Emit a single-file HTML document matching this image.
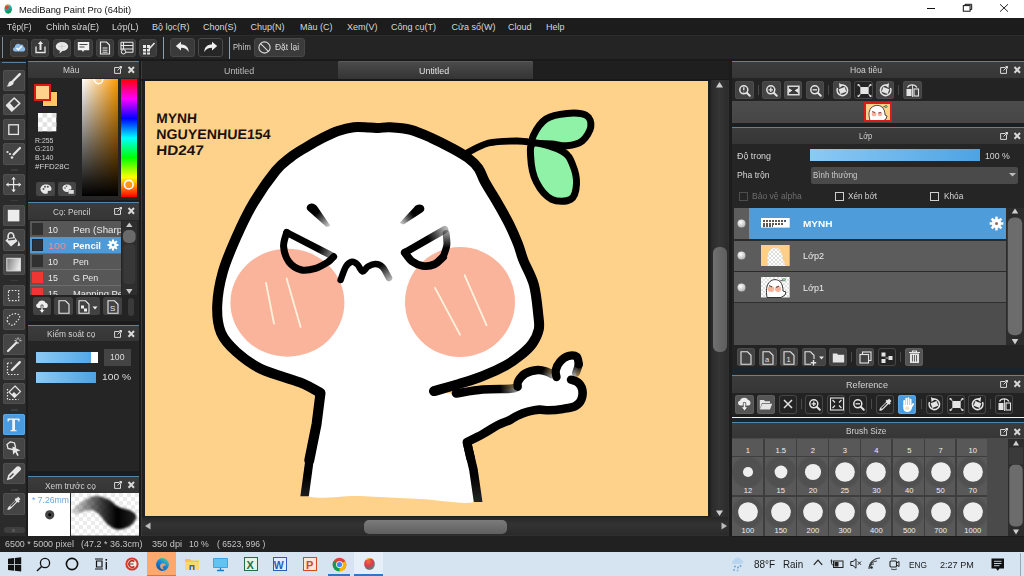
<!DOCTYPE html>
<html><head><meta charset="utf-8">
<style>
*{margin:0;padding:0;box-sizing:border-box}
html,body{width:1024px;height:576px;overflow:hidden;background:#1e1e1e;font-family:"Liberation Sans",sans-serif}
.a{position:absolute}
.t{position:absolute;white-space:nowrap;line-height:1}
svg{position:absolute;overflow:visible}
</style></head><body>
<div class="a" style="left:0px;top:0px;width:1024px;height:18px;background:#fff;"></div>
<div class="a" style="left:0px;top:18px;width:1024px;height:17px;background:#1c1c1c;"></div>
<div class="a" style="left:0px;top:35px;width:1024px;height:26px;background:#242424;"></div>
<div class="a" style="left:0px;top:61px;width:1024px;height:476px;background:#1e1e1e;"></div>
<div class="a" style="left:0px;top:537px;width:1024px;height:14px;background:#202020;"></div>
<div class="a" style="left:0px;top:551px;width:1024px;height:25px;background:#d9e6f2;"></div>
<svg style="left:3.5px;top:3.5px" width="9" height="10" viewBox="0 0 9 10"><defs><linearGradient id="tg" x1="0" y1="0" x2="0.3" y2="1"><stop offset="0" stop-color="#3ad0b0"/><stop offset="0.6" stop-color="#18a8a0"/><stop offset="1" stop-color="#0c9040"/></linearGradient></defs><ellipse cx="4.2" cy="5.1" rx="3.8" ry="4.6" fill="url(#tg)"/><circle cx="2.9" cy="3.2" r="2" fill="#e5402e"/><path d="M1.5 1.8 C2.5 0.5 4.5 0.6 5 1.6" stroke="#f4a83a" stroke-width="1" fill="none"/></svg>
<div class="t" style="left:19.00px;top:4.96px;font-size:9.5px;color:#111;transform:scaleX(0.9822) ;transform-origin:0 8.04px;">MediBang Paint Pro (64bit)</div>
<div class="t" style="left:7.00px;top:22.78px;font-size:9px;color:#d8d8d8;transform:scaleX(0.9074) ;transform-origin:0 7.62px;">Tệp(F)</div>
<div class="t" style="left:45.80px;top:22.78px;font-size:9px;color:#d8d8d8;transform:scaleX(0.9901) ;transform-origin:0 7.62px;">Chỉnh sửa(E)</div>
<div class="t" style="left:112.40px;top:22.78px;font-size:9px;color:#d8d8d8;transform:scaleX(0.9812) ;transform-origin:0 7.62px;">Lớp(L)</div>
<div class="t" style="left:152.00px;top:22.78px;font-size:9px;color:#d8d8d8;">Bộ lọc(R)</div>
<div class="t" style="left:203.00px;top:22.78px;font-size:9px;color:#d8d8d8;">Chọn(S)</div>
<div class="t" style="left:250.60px;top:22.78px;font-size:9px;color:#d8d8d8;">Chụp(N)</div>
<div class="t" style="left:300.00px;top:22.78px;font-size:9px;color:#d8d8d8;">Màu (C)</div>
<div class="t" style="left:347.00px;top:22.78px;font-size:9px;color:#d8d8d8;">Xem(V)</div>
<div class="t" style="left:391.00px;top:22.78px;font-size:9px;color:#d8d8d8;">Công cụ(T)</div>
<div class="t" style="left:451.50px;top:22.78px;font-size:9px;color:#d8d8d8;">Cửa sổ(W)</div>
<div class="t" style="left:508.00px;top:22.78px;font-size:9px;color:#d8d8d8;">Cloud</div>
<div class="t" style="left:546.00px;top:22.78px;font-size:9px;color:#d8d8d8;">Help</div>
<div class="a" style="left:0px;top:35px;width:1024px;height:1px;background:#2c2c2c;"></div>
<div class="a" style="left:2px;top:37px;width:1px;height:21px;background:#7a8a96;"></div>
<div class="a" style="left:9.8px;top:38.5px;width:18.2px;height:18px;background:#3a3a3a;border:1px solid #454545;border-radius:3px"></div>
<div class="a" style="left:31.3px;top:38.5px;width:18.2px;height:18px;background:#3a3a3a;border:1px solid #454545;border-radius:3px"></div>
<div class="a" style="left:53px;top:38.5px;width:18.2px;height:18px;background:#3a3a3a;border:1px solid #454545;border-radius:3px"></div>
<div class="a" style="left:74.4px;top:38.5px;width:18.2px;height:18px;background:#3a3a3a;border:1px solid #454545;border-radius:3px"></div>
<div class="a" style="left:96px;top:38.5px;width:18.2px;height:18px;background:#3a3a3a;border:1px solid #454545;border-radius:3px"></div>
<div class="a" style="left:117.7px;top:38.5px;width:18.2px;height:18px;background:#3a3a3a;border:1px solid #454545;border-radius:3px"></div>
<div class="a" style="left:139.2px;top:38.5px;width:18.2px;height:18px;background:#3a3a3a;border:1px solid #454545;border-radius:3px"></div>
<svg style="left:12px;top:41px" width="14" height="12" viewBox="0 0 14 12"><path d="M3 10.5 C0.5 10.5 0.3 6.5 2.8 6.3 C2.8 3 6.5 1.5 8.3 3.8 C9.8 2.8 12 4 11.6 6 C13.8 6.3 13.8 10.5 11.3 10.5Z" fill="#8dbbe8"/><path d="M4.5 7 L6.3 8.8 L9.8 5.2" stroke="#fff" stroke-width="1.4" fill="none"/></svg>
<svg style="left:34px;top:40px" width="13" height="14" viewBox="0 0 13 14"><path d="M2 6.5 V12.5 H11 V6.5" stroke="#e8e8e8" stroke-width="1.3" fill="none"/><path d="M6.5 1 L3.8 4 H5.5 V10 H7.5 V4 H9.2Z" fill="#e8e8e8"/></svg>
<svg style="left:55px;top:41px" width="14" height="13" viewBox="0 0 14 13"><ellipse cx="7" cy="5.5" rx="6.2" ry="4.6" fill="#e8e8e8"/><path d="M5 9.5 L4.5 12.5 L8 9.6Z" fill="#e8e8e8"/><path d="M3.5 5.5 H10.5 M7 2.5 V8.5" stroke="#bbb" stroke-width="0.5"/></svg>
<svg style="left:77px;top:41px" width="13" height="13" viewBox="0 0 13 13"><path d="M0.8 1 H12.2 V9.3 H7.2 L6 11 L4.8 9.3 H0.8Z" fill="#f0f0f0"/><path d="M2.5 3.5 H10.5 M2.5 6 H7.5" stroke="#444" stroke-width="1.1"/></svg>
<svg style="left:99px;top:40.5px" width="12" height="14" viewBox="0 0 12 14"><path d="M1.5 1 H7.5 L10.5 4 V13 H1.5Z" stroke="#e8e8e8" stroke-width="1.2" fill="none"/><path d="M3.5 7 H8.5 M3.5 9.2 H8.5 M3.5 11.2 H8.5" stroke="#e8e8e8" stroke-width="1"/></svg>
<svg style="left:120px;top:40.5px" width="14" height="14" viewBox="0 0 14 14"><path d="M1 1.2 H13 M1 1.2 V9 M3.5 1.2 V13 M1 4.5 H13 M1 8 H13 M5.5 11.3 H13 M13 1.2 V11.3" stroke="#e8e8e8" stroke-width="1.1" fill="none"/><circle cx="3.5" cy="10.8" r="2.2" stroke="#e8e8e8" stroke-width="1" fill="#3a3a3a"/></svg>
<svg style="left:142px;top:40.5px" width="14" height="14" viewBox="0 0 14 14"><path d="M1 4 H4 V7 H1Z M5 4 H8 V7 H5Z M1 8 H4 V10.5 H1Z M5 8 H8 V10.5 H5Z M1 11.5 H4 V13.5 H1Z M5 11.5 H8 V13.5 H5Z" fill="#e8e8e8"/><path d="M7 8 L12.5 2" stroke="#e8e8e8" stroke-width="1.6"/></svg>
<div class="a" style="left:162.7px;top:36.5px;width:1px;height:22px;background:#8aa0b0;"></div>
<div class="a" style="left:170.2px;top:38px;width:24.6px;height:18.5px;background:#3a3a3a;border:1px solid #474747;border-radius:3px"></div>
<div class="a" style="left:198.4px;top:38px;width:24.3px;height:18.5px;background:#262626;border:1px solid #4a4a4a;border-radius:3px"></div>
<svg style="left:175px;top:41px" width="15" height="12" viewBox="0 0 15 12"><path d="M0.8 5 L6 0.8 V3.4 C10.5 3.4 13.8 6 13.6 11 C12 8 9.5 6.8 6 6.8 V9.4Z" fill="#efefef"/></svg>
<svg style="left:203px;top:41px" width="15" height="12" viewBox="0 0 15 12"><path d="M14.2 5 L9 0.8 V3.4 C4.5 3.4 1.2 6 1.4 11 C3 8 5.5 6.8 9 6.8 V9.4Z" fill="#efefef"/></svg>
<div class="a" style="left:229px;top:36.5px;width:1px;height:22px;background:#8aa0b0;"></div>
<div class="t" style="left:233.20px;top:43.38px;font-size:9px;color:#cfcfcf;transform:scaleX(0.8476) ;transform-origin:0 7.62px;">Phím</div>
<div class="a" style="left:253.7px;top:38px;width:51.3px;height:18.5px;background:#3b3b3b;border:1px solid #484848;border-radius:3px"></div>
<svg style="left:257.5px;top:41px" width="13" height="13" viewBox="0 0 13 13"><circle cx="6.5" cy="6.5" r="5.6" stroke="#dcdcdc" stroke-width="1.1" fill="none"/><path d="M2.6 2.6 L10.4 10.4" stroke="#dcdcdc" stroke-width="1.1"/></svg>
<div class="t" style="left:274.50px;top:43.38px;font-size:9px;color:#d8d8d8;transform:scaleX(0.9412) ;transform-origin:0 7.62px;">Đặt lại</div>
<div class="a" style="left:0px;top:58.5px;width:1024px;height:2.5px;background:#1a1a1a;"></div>
<div class="a" style="left:926.7px;top:7.9px;width:8.5px;height:1px;background:#111;"></div>
<svg style="left:962px;top:3px" width="12" height="10" viewBox="0 0 12 10"><rect x="1.3" y="2.6" width="6.8" height="5.6" stroke="#111" stroke-width="1" fill="#fff"/><path d="M3 2.6 V1.3 H9.7 V6.5 H8.1" stroke="#111" stroke-width="1" fill="none"/></svg>
<svg style="left:999px;top:3px" width="11" height="10" viewBox="0 0 11 10"><path d="M1 1.2 L9 8.7 M9 1.2 L1 8.7" stroke="#111" stroke-width="0.9"/></svg>
<div class="a" style="left:0px;top:61px;width:26px;height:476px;background:#2b2b2b;"></div>
<div class="a" style="left:26px;top:61px;width:2px;height:476px;background:#1c1c1c;"></div>
<div class="a" style="left:2px;top:62px;width:24px;height:1px;background:#5d7f98;"></div>
<div class="a" style="left:10.5px;top:169.3px;width:7px;height:1.5px;background:#3c3c3c;"></div>
<div class="a" style="left:10.5px;top:199.8px;width:7px;height:1.5px;background:#3c3c3c;"></div>
<div class="a" style="left:10.5px;top:279.5px;width:7px;height:1.5px;background:#3c3c3c;"></div>
<div class="a" style="left:10.5px;top:409.1px;width:7px;height:1.5px;background:#3c3c3c;"></div>
<div class="a" style="left:10.5px;top:489.2px;width:7px;height:1.5px;background:#3c3c3c;"></div>
<div class="a" style="left:3.4px;top:69.6px;width:21.3px;height:21.3px;background:#454545;border-radius:2.5px;box-shadow:inset 0 0 0 1px #505050"></div>
<svg style="left:3.4px;top:69.6px" width="21.3" height="21.3" viewBox="0 0 21.3 21.3"><path d="M16.8 4.2 L9.5 11.5" stroke="#e6e6e6" stroke-width="2.4" stroke-linecap="round"/><path d="M9.8 11.2 C7 10.3 5 12.6 5.3 14.6 L3.6 16.3 C6.6 16.8 9.9 15.4 10.8 13Z" fill="#e6e6e6"/></svg>
<div class="a" style="left:3.4px;top:94.2px;width:21.3px;height:21.3px;background:#454545;border-radius:2.5px;box-shadow:inset 0 0 0 1px #505050"></div>
<svg style="left:3.4px;top:94.2px" width="21.3" height="21.3" viewBox="0 0 21.3 21.3"><path d="M11.2 4 L16.8 9.4 L8.75 17 L3.6 11.4Z" stroke="#e6e6e6" stroke-width="1.5" fill="none" stroke-linejoin="round"/><path d="M3.4 11.4 L6.4 8.6 L11.7 14.4 L8.75 17.2Z" fill="#e6e6e6"/></svg>
<div class="a" style="left:3.4px;top:118.8px;width:21.3px;height:21.3px;background:#454545;border-radius:2.5px;box-shadow:inset 0 0 0 1px #505050"></div>
<svg style="left:3.4px;top:118.8px" width="21.3" height="21.3" viewBox="0 0 21.3 21.3"><rect x="5.8" y="5.8" width="9.6" height="9.6" stroke="#e6e6e6" stroke-width="1.3" fill="none"/></svg>
<div class="a" style="left:3.4px;top:143.4px;width:21.3px;height:21.3px;background:#454545;border-radius:2.5px;box-shadow:inset 0 0 0 1px #505050"></div>
<svg style="left:3.4px;top:143.4px" width="21.3" height="21.3" viewBox="0 0 21.3 21.3"><path d="M17 5 L10.5 11.5" stroke="#e6e6e6" stroke-width="2.2" stroke-linecap="round"/><circle cx="4.5" cy="9" r="1.1" fill="#e6e6e6"/><circle cx="7" cy="11" r="1.1" fill="#e6e6e6"/><circle cx="9" cy="14.5" r="1.3" fill="#e6e6e6"/></svg>
<div class="a" style="left:3.4px;top:174.2px;width:21.3px;height:21.3px;background:#454545;border-radius:2.5px;box-shadow:inset 0 0 0 1px #505050"></div>
<svg style="left:3.4px;top:174.2px" width="21.3" height="21.3" viewBox="0 0 21.3 21.3"><path d="M10.6 3.5 V17.7 M3.5 10.6 H17.7" stroke="#e6e6e6" stroke-width="1.2"/><path d="M10.6 3 L8.4 5.6 H12.8Z M10.6 18.2 L8.4 15.6 H12.8Z M3 10.6 L5.6 8.4 V12.8Z M18.2 10.6 L15.6 8.4 V12.8Z" fill="#e6e6e6"/></svg>
<div class="a" style="left:3.4px;top:204.8px;width:21.3px;height:21.3px;background:#454545;border-radius:2.5px;box-shadow:inset 0 0 0 1px #505050"></div>
<svg style="left:3.4px;top:204.8px" width="21.3" height="21.3" viewBox="0 0 21.3 21.3"><rect x="4.8" y="4.8" width="11.6" height="11.6" fill="#ececec"/></svg>
<div class="a" style="left:3.4px;top:229.4px;width:21.3px;height:21.3px;background:#454545;border-radius:2.5px;box-shadow:inset 0 0 0 1px #505050"></div>
<svg style="left:3.4px;top:229.4px" width="21.3" height="21.3" viewBox="0 0 21.3 21.3"><path d="M5.2 9.3 C4.6 5.5 6 3.6 8 3.8 C10 4 11.2 6.3 10.8 8.6" stroke="#e6e6e6" stroke-width="1.6" fill="none"/><path d="M2.4 11.6 L4.8 9.2 L11.6 8.1 L14.5 11.9 L8 17.6Z" fill="#e6e6e6"/><path d="M5.2 10.8 L12 10" stroke="#454545" stroke-width="1.5"/><path d="M15.6 11.6 L17.4 16.6 L14.6 17.2Z" fill="#e6e6e6"/></svg>
<div class="a" style="left:3.4px;top:254px;width:21.3px;height:21.3px;background:#454545;border-radius:2.5px;box-shadow:inset 0 0 0 1px #505050"></div>
<svg style="left:3.4px;top:254px" width="21.3" height="21.3" viewBox="0 0 21.3 21.3"><defs><linearGradient id="gg" x1="0" y1="0" x2="1" y2="0.3"><stop offset="0" stop-color="#7a7a7a"/><stop offset="1" stop-color="#e8e8e8"/></linearGradient></defs><rect x="3.8" y="4.3" width="13.6" height="12.6" fill="url(#gg)" stroke="#dcdcdc" stroke-width="1"/></svg>
<div class="a" style="left:3.4px;top:284.6px;width:21.3px;height:21.3px;background:#454545;border-radius:2.5px;box-shadow:inset 0 0 0 1px #505050"></div>
<svg style="left:3.4px;top:284.6px" width="21.3" height="21.3" viewBox="0 0 21.3 21.3"><rect x="5.5" y="5.5" width="10.2" height="10.2" stroke="#e6e6e6" stroke-width="1.2" stroke-dasharray="1.6 1.6" fill="none"/></svg>
<div class="a" style="left:3.4px;top:309.2px;width:21.3px;height:21.3px;background:#454545;border-radius:2.5px;box-shadow:inset 0 0 0 1px #505050"></div>
<svg style="left:3.4px;top:309.2px" width="21.3" height="21.3" viewBox="0 0 21.3 21.3"><path d="M4.5 12.5 C3 9 6.5 6 10 5 C14 3.8 17.5 5.5 16.5 9 C15.8 11.5 13 12 12 14.5 C11 17 6.5 17 4.5 12.5Z" stroke="#e6e6e6" stroke-width="1.2" stroke-dasharray="1.5 1.5" fill="none"/></svg>
<div class="a" style="left:3.4px;top:333.8px;width:21.3px;height:21.3px;background:#454545;border-radius:2.5px;box-shadow:inset 0 0 0 1px #505050"></div>
<svg style="left:3.4px;top:333.8px" width="21.3" height="21.3" viewBox="0 0 21.3 21.3"><path d="M5 17 L13.5 8.5" stroke="#e6e6e6" stroke-width="2.2" stroke-linecap="round"/><path d="M15 3.5 V5.5 M15 8 V10 M11.5 6.7 H13.5 M16.5 6.7 H18.5 M12.8 4.5 L13.8 5.5 M17.3 4.5 L16.3 5.5" stroke="#e6e6e6" stroke-width="1"/></svg>
<div class="a" style="left:3.4px;top:358.4px;width:21.3px;height:21.3px;background:#454545;border-radius:2.5px;box-shadow:inset 0 0 0 1px #505050"></div>
<svg style="left:3.4px;top:358.4px" width="21.3" height="21.3" viewBox="0 0 21.3 21.3"><path d="M4.5 5 V16.5 H15.5" stroke="#e6e6e6" stroke-width="1.2" stroke-dasharray="1.5 1.5" fill="none"/><path d="M4.5 5 H9" stroke="#e6e6e6" stroke-width="1.2" stroke-dasharray="1.5 1.5"/><path d="M16.8 4.2 L9 12" stroke="#e6e6e6" stroke-width="2.4" stroke-linecap="round"/></svg>
<div class="a" style="left:3.4px;top:383px;width:21.3px;height:21.3px;background:#454545;border-radius:2.5px;box-shadow:inset 0 0 0 1px #505050"></div>
<svg style="left:3.4px;top:383px" width="21.3" height="21.3" viewBox="0 0 21.3 21.3"><path d="M4.5 6 V16.5 H15.5" stroke="#e6e6e6" stroke-width="1.2" stroke-dasharray="1.5 1.5" fill="none"/><path d="M12 3 L17.5 8.5 L11.5 14.5 L6 9Z" stroke="#e6e6e6" stroke-width="1.2" fill="#444"/><path d="M8.5 11.5 L11.5 14.5 L14 12 L11 9Z" fill="#e6e6e6"/></svg>
<div class="a" style="left:3.4px;top:413.6px;width:21.3px;height:21.3px;background:#4a9be0;border-radius:2.5px;box-shadow:inset 0 0 0 1px #5aa8e8"></div>
<svg style="left:3.4px;top:413.6px" width="21.3" height="21.3" viewBox="0 0 21.3 21.3"><path d="M4.5 4.5 H16.5 V7.5 H15.5 C15.3 6 14.8 5.8 12 5.8 V15.6 C12 16.3 12.5 16.4 13.8 16.5 V17.2 H7.4 V16.5 C8.7 16.4 9.2 16.3 9.2 15.6 V5.8 C6.4 5.8 5.9 6 5.7 7.5 H4.5Z" fill="#f0f6fc"/></svg>
<div class="a" style="left:3.4px;top:438.2px;width:21.3px;height:21.3px;background:#454545;border-radius:2.5px;box-shadow:inset 0 0 0 1px #505050"></div>
<svg style="left:3.4px;top:438.2px" width="21.3" height="21.3" viewBox="0 0 21.3 21.3"><path d="M7.5 3.8 L11.5 5 L12.5 9 L9.5 11.5 L5 10.5 L4 6.5Z" stroke="#e6e6e6" stroke-width="1.3" fill="none"/><path d="M9.5 8.5 L17.5 12.5 L13.8 13.5 L15.8 17.3 L14.3 18 L12.3 14.3 L10 16.8Z" fill="#e6e6e6"/></svg>
<div class="a" style="left:3.4px;top:462.8px;width:21.3px;height:21.3px;background:#454545;border-radius:2.5px;box-shadow:inset 0 0 0 1px #505050"></div>
<svg style="left:3.4px;top:462.8px" width="21.3" height="21.3" viewBox="0 0 21.3 21.3"><path d="M17.5 4.5 C18.5 5.5 18 6.8 17 7.8 L9 15.8 L3.8 17.2 L5.2 12 L13.5 3.8 C14.8 2.8 16.3 3.3 17.5 4.5Z" fill="#e6e6e6"/><path d="M6.5 14.5 L10.5 10.5" stroke="#454545" stroke-width="1.4"/></svg>
<div class="a" style="left:3.4px;top:493.4px;width:21.3px;height:21.3px;background:#454545;border-radius:2.5px;box-shadow:inset 0 0 0 1px #505050"></div>
<svg style="left:3.4px;top:493.4px" width="21.3" height="21.3" viewBox="0 0 21.3 21.3"><path d="M15 3.5 L17.5 6 L16 7.5 L16.8 8.3 L15.3 9.8 L14.5 9 L8.5 15 C7.5 16.2 6 17.2 4.5 17 C4.3 15.5 5.3 14 6.5 13 L12.5 7 L11.7 6.2 L13.2 4.7 L14 5.5Z" fill="#e6e6e6"/><path d="M7.5 13.5 L12.8 8.3" stroke="#454545" stroke-width="1.3"/></svg>
<div class="a" style="left:3.5px;top:527.3px;width:21px;height:6px;background:#3f3f3f;border-radius:3px"></div>
<div class="a" style="left:12px;top:528.5px;width:3px;height:3.5px;background:#555;"></div>
<div class="a" style="left:28px;top:61px;width:111px;height:476px;background:#252525;"></div>
<div class="a" style="left:139px;top:61px;width:1.5px;height:476px;background:#1a1a1a;"></div>
<div class="a" style="left:28px;top:61px;width:111px;height:1px;background:#4f87ad;"></div>
<div class="a" style="left:28px;top:62px;width:111px;height:16px;background:linear-gradient(#3c3c3c,#353535)"></div>
<div class="t" style="left:62.50px;top:66.20px;font-size:8.5px;color:#d2d2d2;transform:scaleX(0.9911) ;transform-origin:0 7.20px;">Màu</div>
<svg style="left:114px;top:65.5px" width="22" height="8" viewBox="0 0 22 8"><path d="M5.5 1.5 H0.6 V7.4 H6.5 V2.5" stroke="#d8d8d8" stroke-width="1" fill="none"/><path d="M3.5 4.5 L7.5 0.5 M5.5 0.5 H7.5 V2.5" stroke="#d8d8d8" stroke-width="1" fill="none"/><path d="M14.5 1 L20 6.8 M20 1 L14.5 6.8" stroke="#d8d8d8" stroke-width="2"/></svg>
<div class="a" style="left:41.8px;top:91px;width:16.4px;height:16.4px;background:#ffc864;border:1px solid #1a1a1a"></div>
<div class="a" style="left:33.9px;top:83.7px;width:17.6px;height:17px;background:#ffd28c;border:2px solid #e01818"></div>
<svg style="left:37.5px;top:112.9px" width="18.3" height="18.3"><rect width="18.3" height="18.3" fill="#fff"/><rect x="4.6" y="0" width="4.6" height="4.6" fill="#e2e2e2"/><rect x="13.7" y="0" width="4.6" height="4.6" fill="#e2e2e2"/><rect x="0" y="4.6" width="4.6" height="4.6" fill="#e2e2e2"/><rect x="9.2" y="4.6" width="4.6" height="4.6" fill="#e2e2e2"/><rect x="4.6" y="9.2" width="4.6" height="4.6" fill="#e2e2e2"/><rect x="13.7" y="9.2" width="4.6" height="4.6" fill="#e2e2e2"/><rect x="0" y="13.7" width="4.6" height="4.6" fill="#e2e2e2"/><rect x="9.2" y="13.7" width="4.6" height="4.6" fill="#e2e2e2"/></svg>
<div class="t" style="left:34.60px;top:136.71px;font-size:7.2px;color:#d4d4d4;transform:scaleX(0.9590) ;transform-origin:0 6.09px;">R:255</div>
<div class="t" style="left:34.60px;top:145.46px;font-size:7.2px;color:#d4d4d4;transform:scaleX(0.9391) ;transform-origin:0 6.09px;">G:210</div>
<div class="t" style="left:34.60px;top:154.21px;font-size:7.2px;color:#d4d4d4;transform:scaleX(0.9789) ;transform-origin:0 6.09px;">B:140</div>
<div class="t" style="left:34.60px;top:162.66px;font-size:7.2px;color:#d4d4d4;transform:scaleX(1.1041) ;transform-origin:0 6.09px;">#FFD28C</div>
<div class="a" style="left:36px;top:182.2px;width:18.5px;height:13.6px;background:#464646;border-radius:2px"></div>
<div class="a" style="left:57.7px;top:182.2px;width:18.5px;height:13.6px;background:#464646;border-radius:2px"></div>
<svg style="left:40px;top:184px" width="12" height="10" viewBox="0 0 12 10"><path d="M6 0.5 C9.5 0.5 11.5 2.5 11.5 5 C11.5 7 10 7 9 6.8 C8 6.6 7.5 7.5 7.8 8.5 C8 9.5 7 9.8 6 9.8 C2.8 9.8 0.5 7.5 0.5 5 C0.5 2.5 2.8 0.5 6 0.5Z" fill="#e8e8e8"/><circle cx="3.5" cy="5" r="1" fill="#555"/><circle cx="5" cy="2.8" r="1" fill="#555"/><circle cx="7.8" cy="2.8" r="1" fill="#555"/></svg>
<svg style="left:61.5px;top:184px" width="12" height="10" viewBox="0 0 12 10"><path d="M5 0.5 C8 0.5 9.5 2 9.5 4 C9.5 5.5 8.5 5.5 7.8 5.4 C7 5.3 6.5 6 6.8 6.8 C7 7.6 6 8 5 8 C2.5 8 0.5 6 0.5 4 C0.5 2 2.5 0.5 5 0.5Z" fill="#e8e8e8"/><rect x="6.5" y="6" width="5.3" height="3.8" fill="#ddd"/><circle cx="3" cy="4" r="0.8" fill="#555"/><circle cx="4.5" cy="2.3" r="0.8" fill="#555"/></svg>
<div class="a" style="left:82.2px;top:78.8px;width:35.5px;height:117.7px;background:linear-gradient(to bottom,rgba(0,0,0,0),#000),linear-gradient(to right,#fff,#ff9900)"></div>
<div class="a" style="left:82.2px;top:78.8px;width:35.5px;height:10px;overflow:hidden"><svg style="left:11.2px;top:-4.5px" width="11" height="11"><circle cx="5.5" cy="5.5" r="4.2" stroke="#fff" stroke-width="1.4" fill="none"/></svg></div>
<div class="a" style="left:120.9px;top:78.8px;width:16.2px;height:118.2px;background:linear-gradient(to bottom,#ff0000 0%,#ff00ff 16.67%,#0000ff 33.33%,#00ffff 50%,#00ff00 66.67%,#ffff00 83.33%,#ff0000 100%)"></div>
<svg style="left:123px;top:179px" width="12" height="12"><circle cx="5.8" cy="5.7" r="4.3" stroke="#fff" stroke-width="1.6" fill="#ff9a10"/></svg>
<div class="a" style="left:28px;top:199.5px;width:111px;height:2.5px;background:#1c1c1c;"></div>
<div class="a" style="left:28px;top:202px;width:111px;height:1px;background:#4f87ad;"></div>
<div class="a" style="left:28px;top:203px;width:111px;height:17px;background:linear-gradient(#3c3c3c,#353535)"></div>
<div class="t" style="left:52.50px;top:207.80px;font-size:8.5px;color:#d2d2d2;transform:scaleX(0.9622) ;transform-origin:0 7.20px;">Cọ: Pencil</div>
<svg style="left:114px;top:207px" width="22" height="8" viewBox="0 0 22 8"><path d="M5.5 1.5 H0.6 V7.4 H6.5 V2.5" stroke="#d8d8d8" stroke-width="1" fill="none"/><path d="M3.5 4.5 L7.5 0.5 M5.5 0.5 H7.5 V2.5" stroke="#d8d8d8" stroke-width="1" fill="none"/><path d="M14.5 1 L20 6.8 M20 1 L14.5 6.8" stroke="#d8d8d8" stroke-width="2"/></svg>
<div class="a" style="left:29.6px;top:221px;width:91.2px;height:73.6px;background:#575757;"></div>
<div class="a" style="left:29.6px;top:221px;width:91.2px;height:73.6px;overflow:hidden">
<div class="a" style="left:0;top:15.6px;width:92px;height:1px;background:#6c6c6c"></div>
<div class="a" style="left:2.4px;top:2px;width:11px;height:11.5px;background:#303030;"></div>
<div class="t" style="left:18.30px;top:3.67px;font-size:9.6px;color:#ececec;transform:scaleX(0.9196) ;transform-origin:0 8.13px;">10</div>
<div class="t" style="left:43.20px;top:3.67px;font-size:9.6px;color:#ececec;transform:scaleX(1.0103) ;transform-origin:0 8.13px;">Pen (Sharp</div>
<div class="a" style="left:0;top:16.099999999999994px;width:92px;height:16.2px;background:#4d9ad6"></div>
<div class="a" style="left:0;top:31.699999999999996px;width:92px;height:1px;background:#6c6c6c"></div>
<div class="a" style="left:2.4px;top:18.099999999999994px;width:11px;height:11.5px;background:#2c3138;border:1px solid #1a2a3a"></div>
<div class="t" style="left:18.30px;top:19.77px;font-size:9.6px;color:#ff8585;transform:scaleX(1.1261) ;transform-origin:0 8.13px;">100</div>
<div class="t" style="left:43.20px;top:19.77px;font-size:9.6px;color:#fff;font-weight:bold;transform:scaleX(0.9906) ;transform-origin:0 8.13px;">Pencil</div>
<div class="a" style="left:0;top:48.00000000000001px;width:92px;height:1px;background:#6c6c6c"></div>
<div class="a" style="left:2.4px;top:34.400000000000006px;width:11px;height:11.5px;background:#303030;"></div>
<div class="t" style="left:18.30px;top:36.07px;font-size:9.6px;color:#ececec;transform:scaleX(0.9196) ;transform-origin:0 8.13px;">10</div>
<div class="t" style="left:43.20px;top:36.07px;font-size:9.6px;color:#ececec;transform:scaleX(0.9260) ;transform-origin:0 8.13px;">Pen</div>
<div class="a" style="left:0;top:64.1px;width:92px;height:1px;background:#6c6c6c"></div>
<div class="a" style="left:2.4px;top:50.5px;width:11px;height:11.5px;background:#f03535;"></div>
<div class="t" style="left:18.30px;top:52.17px;font-size:9.6px;color:#ececec;transform:scaleX(0.9196) ;transform-origin:0 8.13px;">15</div>
<div class="t" style="left:43.20px;top:52.17px;font-size:9.6px;color:#ececec;transform:scaleX(0.9300) ;transform-origin:0 8.13px;">G Pen</div>
<div class="a" style="left:0;top:80.1px;width:92px;height:1px;background:#6c6c6c"></div>
<div class="a" style="left:2.4px;top:66.5px;width:11px;height:11.5px;background:#f03535;"></div>
<div class="t" style="left:18.30px;top:68.17px;font-size:9.6px;color:#ececec;transform:scaleX(0.9196) ;transform-origin:0 8.13px;">15</div>
<div class="t" style="left:43.20px;top:68.17px;font-size:9.6px;color:#ececec;transform:scaleX(0.9774) ;transform-origin:0 8.13px;">Mapping Pe</div>
</div>
<svg style="left:107px;top:239px" width="12" height="12" viewBox="0 0 12 12"><g fill="#fff"><circle cx="6" cy="6" r="3.8"/><rect x="5" y="0.5" width="2" height="11"/><rect x="0.5" y="5" width="11" height="2"/><rect x="5" y="0.5" width="2" height="11" transform="rotate(45 6 6)"/><rect x="5" y="0.5" width="2" height="11" transform="rotate(-45 6 6)"/></g><circle cx="6" cy="6" r="1.3" fill="#4d9ad6"/></svg>
<div class="a" style="left:122px;top:221px;width:14.6px;height:74px;background:#2e2e2e;"></div>
<svg style="left:122px;top:221px" width="15" height="74"><path d="M7.3 1.5 L10.5 6 H4Z" fill="#c8c8c8"/><rect x="1" y="9" width="12.6" height="13" rx="5" fill="#6a6a6a"/><rect x="1.5" y="23" width="11.6" height="40" rx="4" fill="#383838"/><path d="M7.3 73 L10.5 68 H4Z" fill="#c8c8c8"/></svg>
<div class="a" style="left:28px;top:295px;width:111px;height:25px;background:#232323;"></div>
<div class="a" style="left:32.7px;top:297.2px;width:18.2px;height:18.3px;background:#424242;border-radius:2.5px"></div>
<div class="a" style="left:54.2px;top:297.2px;width:18.6px;height:18.3px;background:#424242;border-radius:2.5px"></div>
<div class="a" style="left:75.8px;top:297.2px;width:24.3px;height:18.3px;background:#424242;border-radius:2.5px"></div>
<div class="a" style="left:103.2px;top:297.2px;width:18.8px;height:18.3px;background:#424242;border-radius:2.5px"></div>
<div class="a" style="left:127.8px;top:297.5px;width:6.3px;height:18px;background:#3a3a3a;border-radius:3px"></div>
<svg style="left:35px;top:299px" width="14" height="15" viewBox="0 0 14 15"><path d="M3.5 9 C0.8 9 0.3 5 3 4.6 C3.5 1 9.5 0.5 10.5 3.8 C13.5 4 13.6 9 11 9Z" fill="#eee"/><path d="M7 14.5 L4 10.5 H6 V6 H8 V10.5 H10Z" fill="#eee" stroke="#424242" stroke-width="0.8"/></svg>
<svg style="left:58px;top:299.5px" width="12" height="14" viewBox="0 0 12 14"><path d="M1 0.8 H7.5 L11 4.3 V13.2 H1Z" stroke="#e8e8e8" stroke-width="1.1" fill="none"/></svg>
<svg style="left:78px;top:299.5px" width="21" height="14" viewBox="0 0 21 14"><path d="M1 0.8 H7.5 L11 4.3 V13.2 H1Z" stroke="#e8e8e8" stroke-width="1.1" fill="none"/><rect x="3" y="5.5" width="3" height="3" fill="#eee"/><rect x="6" y="8.5" width="3" height="3" fill="#eee"/><path d="M14.5 6.5 H19.5 L17 9.5Z" fill="#eee"/></svg>
<svg style="left:106.5px;top:299.5px" width="12" height="14" viewBox="0 0 12 14"><path d="M1 0.8 H7.5 L11 4.3 V13.2 H1Z" stroke="#e8e8e8" stroke-width="1.1" fill="none"/><text x="3" y="11" font-size="8" font-family="Liberation Sans" fill="#eee">S</text></svg>
<div class="a" style="left:28px;top:321px;width:111px;height:4px;background:#1c1c1c;"></div>
<div class="a" style="left:28px;top:325px;width:111px;height:1px;background:#4f87ad;"></div>
<div class="a" style="left:28px;top:326px;width:111px;height:15.3px;background:linear-gradient(#3c3c3c,#353535)"></div>
<div class="t" style="left:46.70px;top:330.40px;font-size:8.5px;color:#d2d2d2;transform:scaleX(0.9826) ;transform-origin:0 7.20px;">Kiểm soát cọ</div>
<svg style="left:114px;top:330px" width="22" height="8" viewBox="0 0 22 8"><path d="M5.5 1.5 H0.6 V7.4 H6.5 V2.5" stroke="#d8d8d8" stroke-width="1" fill="none"/><path d="M3.5 4.5 L7.5 0.5 M5.5 0.5 H7.5 V2.5" stroke="#d8d8d8" stroke-width="1" fill="none"/><path d="M14.5 1 L20 6.8 M20 1 L14.5 6.8" stroke="#d8d8d8" stroke-width="2"/></svg>
<div class="a" style="left:35.7px;top:351.8px;width:62px;height:11.3px;background:linear-gradient(to right,#8ccaf5,#4da3e3)"></div>
<div class="a" style="left:91px;top:352.3px;width:6.7px;height:10.3px;background:#fff;"></div>
<div class="a" style="left:103.8px;top:349.2px;width:26.9px;height:17px;background:#444;"></div>
<div class="t" style="left:109.95px;top:353.21px;font-size:9.2px;color:#dedede;transform:scaleX(0.9460) ;transform-origin:0 7.79px;">100</div>
<div class="a" style="left:35.7px;top:371.6px;width:60.8px;height:11.8px;background:linear-gradient(to right,#8ccaf5,#4da3e3)"></div>
<div class="t" style="left:102.00px;top:372.71px;font-size:9.2px;color:#dedede;transform:scaleX(1.1134) ;transform-origin:0 7.79px;">100 %</div>
<div class="a" style="left:28px;top:471px;width:111px;height:4.6px;background:#1c1c1c;"></div>
<div class="a" style="left:28px;top:475.6px;width:111px;height:1px;background:#4f87ad;"></div>
<div class="a" style="left:28px;top:476.6px;width:111px;height:16.4px;background:linear-gradient(#3c3c3c,#353535)"></div>
<div class="t" style="left:45.40px;top:481.60px;font-size:8.5px;color:#d2d2d2;transform:scaleX(0.9790) ;transform-origin:0 7.20px;">Xem trước cọ</div>
<svg style="left:114px;top:481px" width="22" height="8" viewBox="0 0 22 8"><path d="M5.5 1.5 H0.6 V7.4 H6.5 V2.5" stroke="#d8d8d8" stroke-width="1" fill="none"/><path d="M3.5 4.5 L7.5 0.5 M5.5 0.5 H7.5 V2.5" stroke="#d8d8d8" stroke-width="1" fill="none"/><path d="M14.5 1 L20 6.8 M20 1 L14.5 6.8" stroke="#d8d8d8" stroke-width="2"/></svg>
<div class="a" style="left:28.4px;top:493px;width:42px;height:42.6px;background:#fff;"></div>
<div class="t" style="left:32.00px;top:495.60px;font-size:8.5px;color:#6aa6dc;transform:scaleX(1.0167) ;transform-origin:0 7.20px;">* 7.26mm</div>
<svg style="left:44px;top:508.5px" width="12" height="12"><circle cx="5.7" cy="5.8" r="4.6" fill="#444"/><circle cx="5.7" cy="5.8" r="1.5" fill="#000"/></svg>
<svg style="left:70.5px;top:493px" width="68" height="42.6"><defs><pattern id="ck" width="8" height="8" patternUnits="userSpaceOnUse"><rect width="8" height="8" fill="#fff"/><rect width="4" height="4" fill="#ececec"/><rect x="4" y="4" width="4" height="4" fill="#ececec"/></pattern><linearGradient id="bs" x1="0" y1="0" x2="1" y2="0"><stop offset="0" stop-color="#000" stop-opacity="0.15"/><stop offset="0.45" stop-color="#000" stop-opacity="0.75"/><stop offset="0.7" stop-color="#000" stop-opacity="1"/><stop offset="1" stop-color="#000" stop-opacity="0.85"/></linearGradient><filter id="bl"><feGaussianBlur stdDeviation="0.9"/></filter></defs><rect width="68" height="42.6" fill="url(#ck)"/><path d="M1.9 19.5 C1.3 18.5 0.9 16.9 3.1 14.7 C5.3 12.5 11.7 8.1 15.3 6.2 C18.9 4.3 21.4 3.1 25.0 3.1 C28.6 3.1 33.5 4.5 37.1 6.2 C40.8 7.9 43.5 11.7 46.9 13.5 C50.3 15.3 55.0 15.9 57.8 17.1 C60.6 18.3 62.7 19.3 63.9 20.7 C65.1 22.1 65.9 23.6 65.1 25.6 C64.3 27.6 62.0 31.1 59.0 32.9 C56.0 34.7 50.5 36.7 46.9 36.5 C43.2 36.3 40.4 34.3 37.1 31.7 C33.9 29.1 30.4 23.1 27.4 20.7 C24.4 18.3 22.3 17.1 18.9 17.1 C15.4 17.1 9.5 20.3 6.7 20.7 C3.9 21.1 2.5 20.5 1.9 19.5Z" fill="url(#bs)" filter="url(#bl)"/></svg>
<div class="a" style="left:28px;top:535.6px;width:111px;height:1px;background:#1c1c1c;"></div>
<div class="a" style="left:140.5px;top:61px;width:590.5px;height:476px;background:#1f1f1f;"></div>
<div class="a" style="left:140.5px;top:61px;width:1px;height:475px;background:#3a3a3a;"></div>
<div class="a" style="left:142px;top:61.4px;width:195.5px;height:17.2px;background:#262626;"></div>
<div class="t" style="left:224.20px;top:67.10px;font-size:8.5px;color:#bdbdbd;transform:scaleX(1.0436) ;transform-origin:0 7.20px;">Untitled</div>
<div class="a" style="left:337.5px;top:60.5px;width:195.7px;height:18.1px;background:linear-gradient(#4c4c4c,#343434);border-radius:2px 2px 0 0;box-shadow:inset 0 1px 0 #5a5a5a"></div>
<div class="t" style="left:419.20px;top:66.60px;font-size:8.5px;color:#e2e2e2;transform:scaleX(1.0470) ;transform-origin:0 7.20px;">Untitled</div>
<div class="a" style="left:140.5px;top:78.6px;width:590.5px;height:2.8px;background:#191919;"></div>
<div class="a" style="left:144.5px;top:81.4px;width:563.8px;height:434.4px;background:#ffd28c;"></div>
<div class="a" style="left:711px;top:79.5px;width:17px;height:437px;background:linear-gradient(to right,#2a2a2a,#353535 50%,#2b2b2b)"></div>
<div class="a" style="left:728px;top:79.5px;width:1.2px;height:457px;background:#2f2f2f;"></div>
<svg style="left:711px;top:80px" width="17" height="10"><path d="M8.5 2 L12 7.5 H5Z" fill="#cfcfcf"/></svg>
<div class="a" style="left:713.4px;top:246.9px;width:13.5px;height:104.7px;background:linear-gradient(to right,#707070,#5e5e5e);border-radius:6px"></div>
<svg style="left:711px;top:508px" width="17" height="10"><path d="M8.5 8 L12 2.5 H5Z" fill="#cfcfcf"/></svg>
<div class="a" style="left:141.5px;top:516.7px;width:586.5px;height:18.6px;background:linear-gradient(#262626,#333 40%,#2a2a2a)"></div>
<div class="a" style="left:141.5px;top:535px;width:588px;height:1.2px;background:#2f2f2f;"></div>
<svg style="left:143px;top:520px" width="10" height="12"><path d="M2 6 L7.5 2.5 V9.5Z" fill="#bdbdbd"/></svg>
<div class="a" style="left:364.4px;top:519.6px;width:142.6px;height:14.7px;background:linear-gradient(#7b7b7b,#5f5f5f);border-radius:5px"></div>
<svg style="left:719px;top:520px" width="10" height="12"><path d="M8 6 L2.5 2.5 V9.5Z" fill="#bdbdbd"/></svg>
<div class="a" style="left:144.5px;top:81.4px;width:563.8px;height:434.4px;overflow:hidden">
<svg style="left:-144.5px;top:-81.4px" width="1024" height="576" viewBox="0 0 1024 576">
<defs>
<clipPath id="legclip"><path d="M0 0 H1024 V502 H400 V496.3 H0Z"/></clipPath>
<linearGradient id="fArm" gradientUnits="userSpaceOnUse" x1="500" y1="389" x2="518" y2="387"><stop offset="0" stop-color="#000"/><stop offset="1" stop-color="#000" stop-opacity="0.4"/></linearGradient>
<linearGradient id="fKn" gradientUnits="userSpaceOnUse" x1="543" y1="370" x2="554" y2="375"><stop offset="0" stop-color="#000"/><stop offset="1" stop-color="#000" stop-opacity="0.35"/></linearGradient>
<linearGradient id="fTh" gradientUnits="userSpaceOnUse" x1="578" y1="365" x2="576" y2="376"><stop offset="0" stop-color="#000"/><stop offset="1" stop-color="#000" stop-opacity="0.35"/></linearGradient>
<linearGradient id="fEyeL" gradientUnits="userSpaceOnUse" x1="318" y1="250" x2="336" y2="259"><stop offset="0" stop-color="#000"/><stop offset="1" stop-color="#000" stop-opacity="0.3"/></linearGradient>
<linearGradient id="fEyeR" gradientUnits="userSpaceOnUse" x1="428" y1="239" x2="446" y2="229"><stop offset="0" stop-color="#000"/><stop offset="1" stop-color="#000" stop-opacity="0.3"/></linearGradient>
<linearGradient id="fEyeR2" gradientUnits="userSpaceOnUse" x1="0" y1="248" x2="0" y2="231"><stop offset="0" stop-color="#000"/><stop offset="1" stop-color="#000" stop-opacity="0.35"/></linearGradient>
<linearGradient id="fBrL" gradientUnits="userSpaceOnUse" x1="317" y1="213" x2="330" y2="227"><stop offset="0" stop-color="#000"/><stop offset="1" stop-color="#000" stop-opacity="0.15"/></linearGradient>
<linearGradient id="fBrR" gradientUnits="userSpaceOnUse" x1="413" y1="214" x2="400" y2="224"><stop offset="0" stop-color="#000"/><stop offset="1" stop-color="#000" stop-opacity="0.15"/></linearGradient>
<linearGradient id="fMouth" gradientUnits="userSpaceOnUse" x1="380" y1="265" x2="390" y2="280"><stop offset="0" stop-color="#000"/><stop offset="1" stop-color="#000" stop-opacity="0.3"/></linearGradient>
<linearGradient id="fLeg" gradientUnits="userSpaceOnUse" x1="0" y1="475" x2="0" y2="500"><stop offset="0" stop-color="#000"/><stop offset="1" stop-color="#222"/></linearGradient>
</defs>
<path d="M305.6 495.0 C297.2 489.1 307.5 472.2 309.3 460.3 C311.1 448.4 314.7 435.1 316.6 423.9 C318.5 412.7 323.3 399.9 320.5 393.0 C317.7 386.1 309.9 386.4 300.0 382.4 C290.1 378.4 271.7 374.1 261.1 369.0 C250.5 363.9 243.0 357.9 236.3 351.9 C229.6 345.9 224.2 340.4 221.0 332.8 C217.8 325.2 216.9 316.2 217.2 306.0 C217.5 295.8 219.7 283.1 222.9 271.7 C226.1 260.2 231.2 248.8 236.3 237.3 C241.4 225.8 246.9 214.0 253.5 202.9 C260.1 191.8 269.4 178.7 275.6 171.0 C281.9 163.3 285.8 161.1 291.0 157.0 C296.2 152.9 301.8 149.9 307.0 146.7 C312.2 143.5 317.3 140.6 322.5 138.0 C327.7 135.4 332.8 132.8 338.0 131.0 C343.2 129.2 348.5 127.8 353.8 127.2 C359.0 126.6 365.2 127.4 369.4 127.5 C373.6 127.6 375.3 128.1 378.8 128.0 C382.2 128.0 384.7 126.9 390.0 127.2 C395.3 127.5 403.9 128.0 410.8 129.8 C417.8 131.6 424.8 135.0 431.7 138.1 C438.6 141.2 446.4 145.2 452.5 148.5 C458.6 151.8 463.7 154.6 468.0 157.9 C472.3 161.2 475.7 164.3 478.5 168.3 C481.3 172.3 481.7 176.0 484.8 181.7 C487.9 187.4 493.3 195.6 497.3 202.5 C501.3 209.4 505.3 216.4 508.8 223.3 C512.2 230.2 515.6 237.9 518.0 244.0 C520.4 250.1 520.6 253.2 523.3 260.0 C525.9 266.8 531.4 275.6 533.9 284.8 C536.4 294.0 537.5 307.8 538.3 315.2 C539.1 322.6 539.7 324.7 538.8 329.4 C537.8 334.1 535.4 339.2 532.5 343.4 C529.6 347.6 526.0 350.8 521.6 354.4 C517.2 358.0 512.4 361.7 505.9 365.3 C499.4 368.9 490.3 373.1 482.5 376.2 C474.7 379.4 467.1 381.5 459.0 384.0 C450.9 386.5 434.5 389.5 434.0 391.1 C433.5 392.7 447.9 393.7 456.0 393.4 C464.1 393.1 473.4 390.3 482.5 389.5 C491.6 388.7 504.6 390.1 510.6 388.8 C516.6 387.4 515.8 383.6 518.3 381.1 C520.8 378.6 522.0 375.4 525.3 373.5 C528.5 371.6 533.4 369.9 537.8 370.0 C542.2 370.1 548.7 373.9 551.7 374.2 C554.7 374.5 554.6 374.1 556.0 372.0 C557.4 369.9 558.0 364.3 560.0 361.7 C562.0 359.1 565.5 356.9 568.3 356.1 C571.1 355.3 575.0 355.4 576.7 356.8 C578.4 358.2 578.9 361.5 578.8 364.4 C578.6 367.3 576.1 371.0 576.0 374.0 C575.9 377.0 577.0 379.9 578.0 382.5 C579.0 385.1 581.6 386.6 582.2 389.4 C582.8 392.2 582.6 396.4 581.5 399.2 C580.4 402.0 578.4 404.5 575.3 406.1 C572.2 407.7 567.2 408.2 562.8 408.9 C558.4 409.6 552.8 410.2 548.9 410.3 C545.0 410.4 542.7 409.4 539.2 409.6 C535.7 409.8 531.7 410.7 528.0 411.7 C524.3 412.7 520.0 414.4 517.0 415.8 C514.0 417.2 513.2 418.5 510.0 420.0 C506.8 421.5 502.6 422.6 498.0 425.0 C493.4 427.4 487.7 431.4 482.5 434.2 C477.3 437.0 468.4 436.1 466.9 442.0 C465.4 447.9 471.7 459.6 473.4 469.4 C475.1 479.2 486.2 496.1 477.3 501.0 C468.4 505.9 439.6 499.8 420.0 499.0 C400.4 498.2 379.1 496.7 360.0 496.0 C340.9 495.3 314.1 500.9 305.6 495.0Z" fill="#fff"/>
<ellipse cx="287.4" cy="302.7" rx="57" ry="54" fill="#fbb49c"/>
<ellipse cx="460" cy="302" rx="55" ry="55" fill="#fbb49c"/>
<path d="M266 283 L274 323.7 M286.6 278.4 L300.6 326.9 M435 287.8 L460 334.7 M464.7 275.3 L486.6 325.3" stroke="#fff2dc" stroke-width="1.8" stroke-linecap="round"/>
<g fill="none" stroke="#000" stroke-linecap="round" stroke-linejoin="round" clip-path="url(#legclip)">
<path d="M309.3 460.3 L316.6 423.9 L320.5 393 C317.1 391.2 309.9 386.4 300.0 382.4 C290.1 378.4 271.7 374.1 261.1 369.0 C250.5 363.9 243.0 357.9 236.3 351.9 C229.6 345.9 224.2 340.4 221.0 332.8 C217.8 325.2 216.9 316.2 217.2 306.0 C217.5 295.8 219.7 283.1 222.9 271.7 C226.1 260.2 231.2 248.8 236.3 237.3 C241.4 225.8 246.9 214.0 253.5 202.9 C260.1 191.8 269.4 178.7 275.6 171.0 C281.9 163.3 285.8 161.1 291.0 157.0 C296.2 152.9 301.8 149.9 307.0 146.7 C312.2 143.5 317.3 140.6 322.5 138.0 C327.7 135.4 332.8 132.8 338.0 131.0 C343.2 129.2 348.5 127.8 353.8 127.2 C359.0 126.6 365.2 127.4 369.4 127.5 C373.6 127.6 375.3 128.1 378.8 128.0 C382.2 128.0 384.7 126.9 390.0 127.2 C395.3 127.5 403.9 128.0 410.8 129.8 C417.8 131.6 424.8 135.0 431.7 138.1 C438.6 141.2 446.4 145.2 452.5 148.5 C458.6 151.8 463.7 154.6 468.0 157.9 C472.3 161.2 475.7 164.3 478.5 168.3 C481.3 172.3 481.7 176.0 484.8 181.7 C487.9 187.4 493.3 195.6 497.3 202.5 C501.3 209.4 505.3 216.4 508.8 223.3 C512.2 230.2 515.6 237.9 518.0 244.0 C520.4 250.1 520.6 253.2 523.3 260.0 C525.9 266.8 531.4 275.6 533.9 284.8 C536.4 294.0 537.5 307.8 538.3 315.2 C539.1 322.6 539.7 324.7 538.8 329.4 C537.8 334.1 535.4 339.2 532.5 343.4 C529.6 347.6 526.0 350.8 521.6 354.4 C517.2 358.0 512.4 361.7 505.9 365.3 C499.4 368.9 490.3 373.1 482.5 376.2 C474.7 379.4 467.1 381.5 459.0 384.0 C450.9 386.5 438.2 389.9 434.0 391.1" stroke-width="10"/>
<path d="M309.8 458 L303.8 502" stroke-width="8.4" stroke-linecap="butt" stroke="url(#fLeg)"/>
<path d="M456.0 393.4 C460.4 392.8 473.4 390.3 482.5 389.5 C491.6 388.7 504.8 389.2 510.6 388.8 C516.5 388.3 516.4 387.0 517.6 386.7" stroke-width="8.6" stroke="url(#fArm)"/>
<path d="M517.6 386.7 C517.7 385.8 517.0 383.3 518.3 381.1 C519.6 378.9 522.0 375.4 525.3 373.5 C528.5 371.6 534.1 370.2 537.8 370.0 C541.5 369.8 545.2 371.3 547.5 372.0 C549.8 372.7 551.0 373.8 551.7 374.2" stroke-width="8.4" stroke="url(#fKn)"/>
<path d="M556.5 377.0 C556.4 375.8 555.2 372.6 555.8 370.0 C556.4 367.4 557.9 364.0 560.0 361.7 C562.1 359.4 565.5 356.9 568.3 356.1 C571.1 355.3 575.0 355.4 576.7 356.8 C578.4 358.2 578.4 363.1 578.8 364.4" stroke-width="8.3"/>
<path d="M578.75 364.4 C578.2 367 577 370 576 373" stroke-width="8" stroke="url(#fTh)"/>
<path d="M571.1 379.7 C572.2 380.2 576.1 380.9 578.0 382.5 C579.9 384.1 581.6 386.6 582.2 389.4 C582.8 392.2 582.6 396.4 581.5 399.2 C580.4 402.0 578.4 404.5 575.3 406.1 C572.2 407.7 567.2 408.2 562.8 408.9 C558.4 409.6 552.8 410.2 548.9 410.3 C545.0 410.4 542.7 409.4 539.2 409.6 C535.7 409.8 531.7 410.7 528.0 411.7 C524.3 412.7 520.0 414.4 517.0 415.8 C514.0 417.2 513.2 418.5 510.0 420.0 C506.8 421.5 502.6 422.6 498.0 425.0 C493.4 427.4 487.7 431.4 482.5 434.2 C477.3 437.0 469.5 440.7 466.9 442.0 L470.5 458" stroke-width="8.6"/>
<path d="M466.9 442 L473.4 469.4 L479 508" stroke-width="8.6" stroke-linecap="butt" stroke="url(#fLeg)"/>
<path d="M465.7 153.5 C469.5 151.8 480.0 145.1 488.6 143.0 C497.2 140.9 509.6 141.0 517.3 141.0 C524.9 141.0 531.6 142.7 534.5 143.0" stroke-width="6.8"/>
<path d="M534.5 143.0 C531.5 141.6 531.6 139.3 533.5 135.3 C535.4 131.3 540.4 122.7 546.0 119.0 C551.6 115.3 560.3 114.0 567.0 113.4 C573.7 112.8 582.0 113.1 586.0 115.3 C590.0 117.5 591.4 122.4 590.8 126.7 C590.2 131.0 586.2 137.8 582.2 141.0 C578.2 144.2 572.1 145.3 567.0 145.8 C561.9 146.3 557.1 144.5 551.7 144.0 C546.3 143.5 537.5 144.4 534.5 143.0Z" fill="#8ff2a7" stroke-width="7"/>
<path d="M534.5 143.0 C529.1 143.9 530.4 150.8 530.7 157.3 C531.0 163.8 532.9 175.0 536.4 182.0 C539.9 189.0 546.0 196.4 551.7 199.3 C557.4 202.2 566.7 201.9 570.8 199.3 C574.9 196.8 576.2 189.7 576.5 184.0 C576.8 178.3 575.0 170.4 572.7 165.0 C570.5 159.6 569.4 155.3 563.0 151.6 C556.6 147.9 539.9 142.1 534.5 143.0Z" fill="#8ff2a7" stroke-width="7"/>
<path d="M286.7 232.5 C286.2 234.8 283.2 241.7 283.6 246.6 C284.0 251.5 286.0 258.1 289.0 262.0 C292.0 265.9 297.2 268.9 301.6 270.0 C306.0 271.1 311.2 269.7 315.6 268.4 C320.0 267.1 325.0 263.9 328.0 262.0 C331.0 260.1 332.7 257.6 333.6 256.7" stroke-width="7"/>
<path d="M286.7 232.5 L333.6 256.7" stroke-width="7" stroke="url(#fEyeL)"/>
<path d="M443.1 257.0 C441.6 258.2 437.7 262.9 434.3 264.4 C430.9 265.9 426.2 266.3 422.5 265.8 C418.8 265.3 415.1 263.6 412.1 261.4 C409.2 259.2 406.0 254.1 404.8 252.6" stroke-width="7.8"/>
<path d="M446.1 233.4 C446.2 235.4 447.3 241.3 446.8 245.2 C446.3 249.1 443.7 255.0 443.1 257.0" stroke-width="7" stroke="url(#fEyeR2)"/>
<path d="M404.8 252.6 L444.6 229.7" stroke-width="7.4" stroke="url(#fEyeR)"/>
<path d="M340.6 280.0 C341.5 277.8 344.1 269.5 346.0 266.5 C347.9 263.5 350.1 262.1 352.0 261.8 C353.9 261.5 355.8 262.9 357.5 264.5 C359.2 266.1 360.8 271.2 362.5 271.5 C364.2 271.8 365.8 267.8 368.0 266.5 C370.2 265.2 373.1 263.9 375.5 264.0 C377.9 264.1 380.2 264.7 382.5 267.0 C384.8 269.3 387.9 276.2 389.0 278.0" stroke-width="6.5" stroke="url(#fMouth)"/>
</g>
<path d="M308.5 204.5 C311.5 202.5 315.5 203.5 317.5 207 L330.5 226 L326.5 227 L308.5 211 C306 209 306 206.5 308.5 204.5Z" fill="url(#fBrL)"/>
<path d="M422.8 205.5 C419.8 203.5 416 204.5 414.2 207.2 L399.5 223 L403.5 224.5 L422.3 212.3 C425 210.3 425 207.8 422.8 205.5Z" fill="url(#fBrR)"/>
</svg></div>
<div class="t" style="left:155.70px;top:110.75px;font-size:14px;color:#1a120c;font-weight:bold;transform:scaleX(0.9850) skewX(-3deg);transform-origin:0 11.85px;">MYNH</div>
<div class="t" style="left:155.70px;top:127.15px;font-size:14px;color:#1a120c;font-weight:bold;transform:scaleX(1.0141) skewX(-3deg);transform-origin:0 11.85px;">NGUYENHUE154</div>
<div class="t" style="left:155.70px;top:142.85px;font-size:14px;color:#1a120c;font-weight:bold;transform:scaleX(1.0881) skewX(-3deg);transform-origin:0 11.85px;">HD247</div>
<div class="a" style="left:731px;top:61px;width:293px;height:476px;background:#252525;"></div>
<div class="a" style="left:729.2px;top:61px;width:2.5px;height:476px;background:#1c1c1c;"></div>
<div class="a" style="left:731.7px;top:60.8px;width:292.3px;height:1.2px;background:#4f87ad;"></div>
<div class="a" style="left:731.7px;top:61.8px;width:292.3px;height:16.7px;background:linear-gradient(#3c3c3c,#363636)"></div>
<div class="t" style="left:849.50px;top:66.20px;font-size:8.5px;color:#d2d2d2;transform:scaleX(1.0099) ;transform-origin:0 7.20px;">Hoa tiêu</div>
<svg style="left:1000px;top:65.8px" width="22" height="8" viewBox="0 0 22 8"><path d="M5.5 1.5 H0.6 V7.4 H6.5 V2.5" stroke="#d8d8d8" stroke-width="1" fill="none"/><path d="M3.5 4.5 L7.5 0.5 M5.5 0.5 H7.5 V2.5" stroke="#d8d8d8" stroke-width="1" fill="none"/><path d="M14.5 1 L20 6.8 M20 1 L14.5 6.8" stroke="#d8d8d8" stroke-width="2"/></svg>
<div class="a" style="left:731.7px;top:78.5px;width:292.3px;height:22.7px;background:#232323;"></div>
<div class="a" style="left:735px;top:80.7px;width:19px;height:18.3px;background:#434343;border-radius:3px;box-shadow:inset 0 0 0 1px #4c4c4c"></div>
<div class="a" style="left:762px;top:80.7px;width:18.7px;height:18.3px;background:#434343;border-radius:3px;box-shadow:inset 0 0 0 1px #4c4c4c"></div>
<div class="a" style="left:784px;top:80.7px;width:18.4px;height:18.3px;background:#434343;border-radius:3px;box-shadow:inset 0 0 0 1px #4c4c4c"></div>
<div class="a" style="left:805.6px;top:80.7px;width:18.4px;height:18.3px;background:#434343;border-radius:3px;box-shadow:inset 0 0 0 1px #4c4c4c"></div>
<div class="a" style="left:833px;top:80.7px;width:18px;height:18.3px;background:#434343;border-radius:3px;box-shadow:inset 0 0 0 1px #4c4c4c"></div>
<div class="a" style="left:854.2px;top:80.7px;width:18.5px;height:18.3px;background:#242424;border-radius:3px;box-shadow:inset 0 0 0 1px #464646"></div>
<div class="a" style="left:876.2px;top:80.7px;width:18.3px;height:18.3px;background:#434343;border-radius:3px;box-shadow:inset 0 0 0 1px #4c4c4c"></div>
<div class="a" style="left:903.3px;top:80.7px;width:18.3px;height:18.3px;background:#434343;border-radius:3px;box-shadow:inset 0 0 0 1px #4c4c4c"></div>
<div class="a" style="left:758px;top:85px;width:1px;height:10px;background:#4a4a4a;"></div>
<div class="a" style="left:828.3px;top:85px;width:1px;height:10px;background:#4a4a4a;"></div>
<div class="a" style="left:898.2px;top:85px;width:1px;height:10px;background:#4a4a4a;"></div>
<svg style="left:735px;top:80.5px" width="19" height="19" viewBox="0 0 19 19"><g transform="translate(0.8 0.8)"><circle cx="8" cy="8" r="4" stroke="#e4e4e4" stroke-width="1.5" fill="none"/><path d="M10.9 10.9 L14 14" stroke="#e4e4e4" stroke-width="2" stroke-linecap="round"/><path d="M8 5.5 V8.5" stroke="#e4e4e4" stroke-width="1.3"/><circle cx="8" cy="10.2" r="0.6" fill="#e4e4e4"/></g></svg>
<svg style="left:762px;top:80.5px" width="19" height="19" viewBox="0 0 19 19"><g transform="translate(0.8 0.8)"><circle cx="8" cy="8" r="4" stroke="#e4e4e4" stroke-width="1.5" fill="none"/><path d="M10.9 10.9 L14 14" stroke="#e4e4e4" stroke-width="2" stroke-linecap="round"/><path d="M5.8 8 H10.2 M8 5.8 V10.2" stroke="#e4e4e4" stroke-width="1.3"/></g></svg>
<svg style="left:784px;top:80.5px" width="19" height="19" viewBox="0 0 19 19"><rect x="3.3" y="4.5" width="12.4" height="10" fill="#d8d8d8"/><rect x="5" y="6" width="9" height="7" fill="#3a3a3a"/><path d="M5 7.3 L8.3 9.5 L5 11.7Z M14 7.3 L10.7 9.5 L14 11.7Z" fill="#e8e8e8"/></svg>
<svg style="left:805.6px;top:80.5px" width="19" height="19" viewBox="0 0 19 19"><g transform="translate(0.8 0.8)"><circle cx="8" cy="8" r="4" stroke="#e4e4e4" stroke-width="1.5" fill="none"/><path d="M10.9 10.9 L14 14" stroke="#e4e4e4" stroke-width="2" stroke-linecap="round"/><path d="M5.8 8 H10.2" stroke="#e4e4e4" stroke-width="1.3"/></g></svg>
<svg style="left:833px;top:80.5px" width="19" height="19" viewBox="0 0 19 19"><g ><path d="M4.5 7 A5.3 5.3 0 1 0 7.5 4.3" stroke="#e4e4e4" stroke-width="1.6" fill="none"/><path d="M6 2 L10 4.2 L6.5 7Z" fill="#e4e4e4"/><rect x="6.3" y="7" width="6.4" height="5" transform="rotate(-20 9.5 9.5)" fill="#e4e4e4"/></g></svg>
<svg style="left:854.5px;top:80.5px" width="19" height="19" viewBox="0 0 19 19"><rect x="5.3" y="6" width="8.4" height="7" fill="#e4e4e4"/><path d="M3.3 3.8 L5.3 5.6 M15.7 3.8 L13.7 5.6 M3.3 15.2 L5.3 13.4 M15.7 15.2 L13.7 13.4" stroke="#e4e4e4" stroke-width="1.2"/><path d="M2.6 3 H4.8 L2.6 5.2Z M16.4 3 H14.2 L16.4 5.2Z M2.6 16 H4.8 L2.6 13.8Z M16.4 16 H14.2 L16.4 13.8Z" fill="#e4e4e4"/></svg>
<svg style="left:876px;top:80.5px" width="19" height="19" viewBox="0 0 19 19"><g transform="translate(19 0) scale(-1 1)"><path d="M4.5 7 A5.3 5.3 0 1 0 7.5 4.3" stroke="#e4e4e4" stroke-width="1.6" fill="none"/><path d="M6 2 L10 4.2 L6.5 7Z" fill="#e4e4e4"/><rect x="6.3" y="7" width="6.4" height="5" transform="rotate(-20 9.5 9.5)" fill="#e4e4e4"/></g></svg>
<svg style="left:903.3px;top:80.5px" width="19" height="19" viewBox="0 0 19 19"><rect x="3.5" y="8" width="5" height="7" fill="#e4e4e4"/><rect x="11" y="8" width="4.5" height="7" stroke="#e4e4e4" stroke-width="1.1" fill="none"/><path d="M4.5 6.5 C6 3 12 3 14 6.5" stroke="#e4e4e4" stroke-width="1.2" fill="none"/><path d="M9.5 4 V16" stroke="#e4e4e4" stroke-width="0.9"/></svg>
<div class="a" style="left:731.7px;top:101.2px;width:292.3px;height:22px;background:linear-gradient(#4c4c4c,#464646)"></div>
<div class="a" style="left:864.2px;top:102px;width:28.1px;height:20.4px;border:2px solid #d81c1c;background:#ffd28c;overflow:hidden">
<svg style="left:0;top:0" width="25" height="17" viewBox="0 0 25 17"><path d="M4 17 C3 12 2 8 5 4 C8 1 13 0.5 16 3 C18 5 19 8 19 11 L21 12 L20 15 L17 17Z" fill="#fff" stroke="#222" stroke-width="0.8"/><ellipse cx="8" cy="10" rx="2.5" ry="2.3" fill="#f8b09a"/><ellipse cx="14" cy="10" rx="2.3" ry="2.3" fill="#f8b09a"/><path d="M17 3 L19 2.5" stroke="#222" stroke-width="0.6"/><ellipse cx="20" cy="2.5" rx="1.3" ry="1" fill="#8ff2a7" stroke="#222" stroke-width="0.5"/><path d="M6 7.5 L9 8.5 M15 8.5 L12.5 9" stroke="#222" stroke-width="0.7"/></svg></div>
<div class="a" style="left:731.7px;top:123.2px;width:292.3px;height:3.5px;background:#1e1e1e;"></div>
<div class="a" style="left:731.7px;top:127px;width:292.3px;height:1.2px;background:#4f87ad;"></div>
<div class="a" style="left:731.7px;top:128px;width:292.3px;height:15.9px;background:linear-gradient(#3c3c3c,#363636)"></div>
<div class="t" style="left:858.50px;top:132.00px;font-size:8.5px;color:#d2d2d2;transform:scaleX(0.8839) ;transform-origin:0 7.20px;">Lớp</div>
<svg style="left:1000px;top:131.5px" width="22" height="8" viewBox="0 0 22 8"><path d="M5.5 1.5 H0.6 V7.4 H6.5 V2.5" stroke="#d8d8d8" stroke-width="1" fill="none"/><path d="M3.5 4.5 L7.5 0.5 M5.5 0.5 H7.5 V2.5" stroke="#d8d8d8" stroke-width="1" fill="none"/><path d="M14.5 1 L20 6.8 M20 1 L14.5 6.8" stroke="#d8d8d8" stroke-width="2"/></svg>
<div class="t" style="left:736.60px;top:152.05px;font-size:8.8px;color:#d6d6d6;transform:scaleX(1.0054) ;transform-origin:0 7.45px;">Độ trong</div>
<div class="a" style="left:809.6px;top:148.9px;width:170.6px;height:12.1px;background:linear-gradient(to right,#8ccaf5,#4da3e3)"></div>
<div class="t" style="left:985.20px;top:151.85px;font-size:8.8px;color:#d6d6d6;transform:scaleX(0.9945) ;transform-origin:0 7.45px;">100 %</div>
<div class="t" style="left:736.60px;top:170.85px;font-size:8.8px;color:#d6d6d6;transform:scaleX(0.9779) ;transform-origin:0 7.45px;">Pha trộn</div>
<div class="a" style="left:810.8px;top:166.5px;width:207.7px;height:17.2px;background:#4a4a4a;border-radius:2px"></div>
<div class="t" style="left:813.20px;top:170.85px;font-size:8.8px;color:#c8c8c8;transform:scaleX(0.9027) ;transform-origin:0 7.45px;">Bình thường</div>
<svg style="left:1008px;top:172px" width="9" height="6"><path d="M1 1 H8 L4.5 4.5Z" fill="#bdbdbd"/></svg>
<div class="a" style="left:738.6px;top:192.3px;width:9.4px;height:8.6px;background:transparent;border:1px solid #4e4e4e"></div>
<div class="t" style="left:752.20px;top:191.85px;font-size:8.8px;color:#6e6e6e;transform:scaleX(0.9699) ;transform-origin:0 7.45px;">Bảo vệ alpha</div>
<div class="a" style="left:835px;top:192.3px;width:9px;height:8.6px;background:transparent;border:1px solid #cfcfcf"></div>
<div class="t" style="left:848.30px;top:191.85px;font-size:8.8px;color:#d6d6d6;transform:scaleX(0.9299) ;transform-origin:0 7.45px;">Xén bớt</div>
<div class="a" style="left:930px;top:192.3px;width:8.8px;height:8.6px;background:transparent;border:1px solid #cfcfcf"></div>
<div class="t" style="left:943.50px;top:191.85px;font-size:8.8px;color:#d6d6d6;transform:scaleX(0.9393) ;transform-origin:0 7.45px;">Khóa</div>
<div class="a" style="left:734.1px;top:207.7px;width:271.8px;height:137.6px;background:#4d4d4d;"></div>
<div class="a" style="left:734.1px;top:207.7px;width:271.8px;height:31.6px;background:#5d5d5d;"></div>
<div class="a" style="left:749px;top:207.7px;width:256.9px;height:31.6px;background:#4e9cd9;"></div>
<div class="a" style="left:734.1px;top:239.3px;width:271.8px;height:1.5px;background:#2a2a2a;"></div>
<div class="a" style="left:734.1px;top:240.8px;width:271.8px;height:30px;background:#5c5c5c;"></div>
<div class="a" style="left:734.1px;top:270.8px;width:271.8px;height:1.5px;background:#2a2a2a;"></div>
<div class="a" style="left:734.1px;top:272.3px;width:271.8px;height:29.4px;background:#5c5c5c;"></div>
<div class="a" style="left:734.1px;top:301.7px;width:271.8px;height:1.5px;background:#2f2f2f;"></div>
<svg style="left:737px;top:218.5px" width="9" height="9"><defs><radialGradient id="eg" cx="0.4" cy="0.35" r="0.6"><stop offset="0" stop-color="#fff"/><stop offset="1" stop-color="#bdbdbd"/></radialGradient></defs><circle cx="4.5" cy="4.5" r="4" fill="url(#eg)"/></svg>
<svg style="left:737px;top:250.6px" width="9" height="9"><defs><radialGradient id="eg" cx="0.4" cy="0.35" r="0.6"><stop offset="0" stop-color="#fff"/><stop offset="1" stop-color="#bdbdbd"/></radialGradient></defs><circle cx="4.5" cy="4.5" r="4" fill="url(#eg)"/></svg>
<svg style="left:737px;top:282.5px" width="9" height="9"><defs><radialGradient id="eg" cx="0.4" cy="0.35" r="0.6"><stop offset="0" stop-color="#fff"/><stop offset="1" stop-color="#bdbdbd"/></radialGradient></defs><circle cx="4.5" cy="4.5" r="4" fill="url(#eg)"/></svg>
<svg style="left:760.5px;top:218.2px" width="28.7" height="9.6"><rect width="28.7" height="9.6" fill="#fff"/><path d="M2 3 H26 M2 6 H22 M2 8 H12" stroke="#222" stroke-width="1.6" stroke-dasharray="2 1"/></svg>
<svg style="left:760.5px;top:245px" width="28.7" height="21"><defs><pattern id="ck2" width="4" height="4" patternUnits="userSpaceOnUse"><rect width="4" height="4" fill="#fff"/><rect width="2" height="2" fill="#ddd"/><rect x="2" y="2" width="2" height="2" fill="#ddd"/></pattern></defs><rect width="28.7" height="21" fill="#ffcf87"/><path d="M7 21 C6 14 6 9 9 5 C12 2 16 2 19 5 C21 8 22 12 22 16 L24 18 V21Z" fill="url(#ck2)"/></svg>
<svg style="left:760.5px;top:277px" width="28.7" height="20.5"><defs><pattern id="ck3" width="4" height="4" patternUnits="userSpaceOnUse"><rect width="4" height="4" fill="#fff"/><rect width="2" height="2" fill="#e2e2e2"/><rect x="2" y="2" width="2" height="2" fill="#e2e2e2"/></pattern></defs><rect width="28.7" height="20.5" fill="url(#ck3)"/><path d="M6 20.5 C5 14 5 8 9 4.5 C12 2 16 2 19 4.5 C21.5 7 22 11 22 14 L25 15 L24 18 L20 20.5Z" fill="#fff" stroke="#333" stroke-width="1"/><ellipse cx="10" cy="12" rx="3.3" ry="3" fill="#f7b29c"/><ellipse cx="17" cy="12" rx="3" ry="3" fill="#f7b29c"/><path d="M8 8.5 L11 10 M18 9 L15 10.5" stroke="#333" stroke-width="0.9"/><path d="M19 4 L22 3" stroke="#333" stroke-width="0.7"/><ellipse cx="23" cy="2.8" rx="1.6" ry="1.2" fill="#8ff2a7" stroke="#333" stroke-width="0.5"/></svg>
<div class="t" style="left:802.50px;top:218.76px;font-size:9.5px;color:#fff;font-weight:bold;transform:scaleX(1.0547) ;transform-origin:0 8.04px;">MYNH</div>
<div class="t" style="left:802.50px;top:250.96px;font-size:9.5px;color:#ececec;transform:scaleX(0.9512) ;transform-origin:0 8.04px;">Lớp2</div>
<div class="t" style="left:802.50px;top:282.86px;font-size:9.5px;color:#ececec;transform:scaleX(0.9512) ;transform-origin:0 8.04px;">Lớp1</div>
<svg style="left:988.5px;top:216px" width="15" height="15" viewBox="0 0 12 12"><g fill="#fff"><circle cx="6" cy="6" r="3.8"/><rect x="5" y="0.5" width="2" height="11"/><rect x="0.5" y="5" width="11" height="2"/><rect x="5" y="0.5" width="2" height="11" transform="rotate(45 6 6)"/><rect x="5" y="0.5" width="2" height="11" transform="rotate(-45 6 6)"/></g><circle cx="6" cy="6" r="1.2" fill="#8a6a5a"/></svg>
<div class="a" style="left:1006px;top:207.7px;width:18px;height:137.6px;background:#2c2c2c;"></div>
<svg style="left:1006px;top:207.7px" width="18" height="137.6"><path d="M9 0.5 L12.3 5.5 H5.7Z" fill="#cfcfcf"/><rect x="1.8" y="9.6" width="14.4" height="117.7" rx="6" fill="#6c6c6c"/><path d="M9 136.5 L12.3 131 H5.7Z" fill="#cfcfcf"/></svg>
<div class="a" style="left:731.7px;top:345.3px;width:292.3px;height:22.7px;background:#232323;"></div>
<div class="a" style="left:737px;top:348.1px;width:17.9px;height:18.3px;background:#434343;border-radius:3px;box-shadow:inset 0 0 0 1px #4c4c4c"></div>
<div class="a" style="left:758.5px;top:348.1px;width:18.3px;height:18.3px;background:#434343;border-radius:3px;box-shadow:inset 0 0 0 1px #4c4c4c"></div>
<div class="a" style="left:780.3px;top:348.1px;width:18px;height:18.3px;background:#434343;border-radius:3px;box-shadow:inset 0 0 0 1px #4c4c4c"></div>
<div class="a" style="left:801.75px;top:348.1px;width:24px;height:18.3px;background:#434343;border-radius:3px;box-shadow:inset 0 0 0 1px #4c4c4c"></div>
<div class="a" style="left:829.25px;top:348.1px;width:17.8px;height:18.3px;background:#434343;border-radius:3px;box-shadow:inset 0 0 0 1px #4c4c4c"></div>
<div class="a" style="left:856px;top:348.1px;width:18px;height:18.3px;background:#434343;border-radius:3px;box-shadow:inset 0 0 0 1px #4c4c4c"></div>
<div class="a" style="left:878px;top:348.1px;width:17.9px;height:18.3px;background:#242424;border-radius:3px;box-shadow:inset 0 0 0 1px #464646"></div>
<div class="a" style="left:905.25px;top:348.1px;width:18px;height:18.3px;background:#555555;border-radius:3px;box-shadow:inset 0 0 0 1px #5e5e5e"></div>
<div class="a" style="left:851.4px;top:352px;width:1px;height:10px;background:#4a4a4a;"></div>
<div class="a" style="left:900.25px;top:352px;width:1px;height:10px;background:#4a4a4a;"></div>
<svg style="left:740px;top:350.5px" width="13" height="14" viewBox="0 0 13 14"><path d="M1 0.8 H7.5 L11 4.3 V13.2 H1Z" stroke="#e4e4e4" stroke-width="1.1" fill="none"/></svg>
<svg style="left:761.8px;top:350.5px" width="13" height="14" viewBox="0 0 13 14"><path d="M1 0.8 H7.5 L11 4.3 V13.2 H1Z" stroke="#e4e4e4" stroke-width="1.1" fill="none"/><text x="3" y="11.3" font-size="7.5" font-family="Liberation Sans" fill="#e4e4e4">a</text></svg>
<svg style="left:783.3px;top:350.5px" width="13" height="14" viewBox="0 0 13 14"><path d="M1 0.8 H7.5 L11 4.3 V13.2 H1Z" stroke="#e4e4e4" stroke-width="1.1" fill="none"/><text x="3.5" y="11.3" font-size="7.5" font-family="Liberation Sans" fill="#e4e4e4">1</text></svg>
<svg style="left:803.5px;top:350.5px" width="22" height="15" viewBox="0 0 22 15"><path d="M7 13.2 H1 V0.8 H6.5 L10 4.3 V8" stroke="#e4e4e4" stroke-width="1.1" fill="none"/><path d="M9.5 9 V14.5 M6.8 11.8 H12.2" stroke="#e4e4e4" stroke-width="1.4"/><path d="M15 5.5 H20 L17.5 8.5Z" fill="#e4e4e4"/></svg>
<svg style="left:832px;top:351px" width="13" height="13" viewBox="0 0 13 13"><path d="M0.8 2.5 H5 L6 3.8 H12.2 V11.5 H0.8Z" fill="#e4e4e4"/></svg>
<svg style="left:858.5px;top:351px" width="13" height="13" viewBox="0 0 13 13"><rect x="3.5" y="1" width="8.5" height="8.5" stroke="#e4e4e4" stroke-width="1.1" fill="none"/><rect x="1" y="3.5" width="8.5" height="8.5" stroke="#e4e4e4" stroke-width="1.1" fill="#434343"/></svg>
<svg style="left:880px;top:350.5px" width="14" height="14" viewBox="0 0 14 14"><rect x="1.5" y="1.5" width="4" height="4" fill="#e4e4e4"/><rect x="1.5" y="8" width="4" height="4" fill="#e4e4e4"/><rect x="8.5" y="5" width="4" height="4" fill="#e4e4e4"/><path d="M5.5 7 H8.5" stroke="#e4e4e4" stroke-width="0.8"/></svg>
<svg style="left:907.5px;top:350.3px" width="13" height="14" viewBox="0 0 13 14"><path d="M1 2.5 H12 M4.5 2.5 V1 H8.5 V2.5" stroke="#e4e4e4" stroke-width="1.1" fill="none"/><path d="M2 3.5 H11 V13 H2Z" fill="#e4e4e4"/><path d="M4.5 5 V11.5 M6.5 5 V11.5 M8.5 5 V11.5" stroke="#555" stroke-width="0.9"/></svg>
<div class="a" style="left:731.7px;top:368px;width:292.3px;height:6px;background:#1c2329;"></div>
<div class="a" style="left:731.7px;top:375px;width:292.3px;height:1.2px;background:#4f87ad;"></div>
<div class="a" style="left:731.7px;top:376px;width:292.3px;height:17.4px;background:linear-gradient(#3c3c3c,#363636)"></div>
<div class="t" style="left:845.90px;top:380.70px;font-size:8.5px;color:#d2d2d2;transform:scaleX(1.0701) ;transform-origin:0 7.20px;">Reference</div>
<svg style="left:1000px;top:380.2px" width="22" height="8" viewBox="0 0 22 8"><path d="M5.5 1.5 H0.6 V7.4 H6.5 V2.5" stroke="#d8d8d8" stroke-width="1" fill="none"/><path d="M3.5 4.5 L7.5 0.5 M5.5 0.5 H7.5 V2.5" stroke="#d8d8d8" stroke-width="1" fill="none"/><path d="M14.5 1 L20 6.8 M20 1 L14.5 6.8" stroke="#d8d8d8" stroke-width="2"/></svg>
<div class="a" style="left:731.7px;top:393.4px;width:292.3px;height:22px;background:#232323;"></div>
<div class="a" style="left:735px;top:394.9px;width:19px;height:18.7px;background:#555555;border-radius:3px;box-shadow:inset 0 0 0 1px #5e5e5e"></div>
<div class="a" style="left:757px;top:394.9px;width:17.9px;height:18.7px;background:#555555;border-radius:3px;box-shadow:inset 0 0 0 1px #5e5e5e"></div>
<div class="a" style="left:778.5px;top:394.9px;width:18.3px;height:18.7px;background:#242424;border-radius:3px;box-shadow:inset 0 0 0 1px #464646"></div>
<div class="a" style="left:805.3px;top:394.9px;width:18.2px;height:18.7px;background:#242424;border-radius:3px;box-shadow:inset 0 0 0 1px #464646"></div>
<div class="a" style="left:827.3px;top:394.9px;width:18.1px;height:18.7px;background:#242424;border-radius:3px;box-shadow:inset 0 0 0 1px #464646"></div>
<div class="a" style="left:849.2px;top:394.9px;width:17.6px;height:18.7px;background:#242424;border-radius:3px;box-shadow:inset 0 0 0 1px #464646"></div>
<div class="a" style="left:876.2px;top:394.9px;width:18px;height:18.7px;background:#242424;border-radius:3px;box-shadow:inset 0 0 0 1px #464646"></div>
<div class="a" style="left:897.7px;top:394.9px;width:18.5px;height:18.7px;background:#4a9be0;border-radius:3px;box-shadow:inset 0 0 0 1px #5aa8e8"></div>
<div class="a" style="left:925.5px;top:394.9px;width:17.3px;height:18.7px;background:#242424;border-radius:3px;box-shadow:inset 0 0 0 1px #464646"></div>
<div class="a" style="left:946.5px;top:394.9px;width:18px;height:18.7px;background:#242424;border-radius:3px;box-shadow:inset 0 0 0 1px #464646"></div>
<div class="a" style="left:968px;top:394.9px;width:18px;height:18.7px;background:#242424;border-radius:3px;box-shadow:inset 0 0 0 1px #464646"></div>
<div class="a" style="left:995.2px;top:394.9px;width:18.2px;height:18.7px;background:#242424;border-radius:3px;box-shadow:inset 0 0 0 1px #464646"></div>
<div class="a" style="left:800.9px;top:399px;width:1px;height:10px;background:#4a4a4a;"></div>
<div class="a" style="left:871.2px;top:399px;width:1px;height:10px;background:#4a4a4a;"></div>
<div class="a" style="left:920.6px;top:399px;width:1px;height:10px;background:#4a4a4a;"></div>
<div class="a" style="left:990.4px;top:399px;width:1px;height:10px;background:#4a4a4a;"></div>
<svg style="left:737px;top:396px" width="15" height="16" viewBox="0 0 15 16"><path d="M3.5 9.5 C0.5 9.5 0.3 5 3 4.8 C3.5 1 10 0.5 11 4 C14.2 4.2 14.3 9.5 11.5 9.5Z" fill="#eee"/><path d="M7.5 15 L4.3 11 H6.3 V6.5 H8.7 V11 H10.7Z" fill="#eee" stroke="#555" stroke-width="0.8"/></svg>
<svg style="left:759px;top:397.5px" width="14" height="13" viewBox="0 0 14 13"><path d="M0.8 2 H5 L6 3.3 H11 V5 H3 L0.8 11Z" fill="#e4e4e4"/><path d="M3.3 5.8 H13.2 L11 11.5 H0.8Z" fill="#e4e4e4"/></svg>
<svg style="left:781.5px;top:398px" width="12" height="12"><path d="M2 2 L10 10 M10 2 L2 10" stroke="#e4e4e4" stroke-width="1.5"/></svg>
<svg style="left:805.3px;top:394.6px" width="19" height="19" viewBox="0 0 19 19"><g transform="translate(0.8 0.8)"><circle cx="8" cy="8" r="4" stroke="#e4e4e4" stroke-width="1.5" fill="none"/><path d="M10.9 10.9 L14 14" stroke="#e4e4e4" stroke-width="2" stroke-linecap="round"/><path d="M5.8 8 H10.2 M8 5.8 V10.2" stroke="#e4e4e4" stroke-width="1.3"/></g></svg>
<svg style="left:827.5px;top:395px" width="18" height="18" viewBox="0 0 18 18"><rect x="2.5" y="3" width="13" height="12" stroke="#e4e4e4" stroke-width="1.1" fill="none"/><path d="M4.5 5 L7 7.5 M13.5 5 L11 7.5 M4.5 13 L7 10.5 M13.5 13 L11 10.5" stroke="#e4e4e4" stroke-width="1.2"/></svg>
<svg style="left:849.2px;top:394.6px" width="19" height="19" viewBox="0 0 19 19"><g transform="translate(0.8 0.8)"><circle cx="8" cy="8" r="4" stroke="#e4e4e4" stroke-width="1.5" fill="none"/><path d="M10.9 10.9 L14 14" stroke="#e4e4e4" stroke-width="2" stroke-linecap="round"/><path d="M5.8 8 H10.2" stroke="#e4e4e4" stroke-width="1.3"/></g></svg>
<svg style="left:878px;top:396.5px" width="15" height="15" viewBox="0 0 15 15"><path d="M11 1.5 L13.5 4 L12 5.5 L12.8 6.3 L11.3 7.8 L10.5 7 L5 12.5 C4 13.5 2.8 14 1.5 13.8 C1.3 12.5 1.8 11.3 2.8 10.3 L8.3 4.8 L7.5 4 L9 2.5 L9.8 3.3Z" fill="#e4e4e4"/><path d="M3.5 11.5 L8.8 6.2" stroke="#242424" stroke-width="1.1"/></svg>
<svg style="left:899.5px;top:395.5px" width="15" height="17" viewBox="0 0 15 17"><g stroke="#fff" stroke-linecap="round" fill="none"><path d="M4.2 10 V4.8" stroke-width="1.8"/><path d="M6.3 9 V2.6" stroke-width="1.8"/><path d="M8.5 9 V2.2" stroke-width="1.8"/><path d="M10.6 9.5 V3.6" stroke-width="1.8"/><path d="M11.2 11 L13.2 8" stroke-width="1.8"/></g><path d="M3.3 9 H11.8 L12 12 C11 15 9.5 16 7.5 16 C5 16 3.3 14.5 3.3 12Z" fill="#fff"/><ellipse cx="7.2" cy="12.3" rx="2" ry="1.7" fill="#f3d3a0" opacity="0.7"/></svg>
<svg style="left:925px;top:394.6px" width="19" height="19" viewBox="0 0 19 19"><g ><path d="M4.5 7 A5.3 5.3 0 1 0 7.5 4.3" stroke="#e4e4e4" stroke-width="1.6" fill="none"/><path d="M6 2 L10 4.2 L6.5 7Z" fill="#e4e4e4"/><rect x="6.3" y="7" width="6.4" height="5" transform="rotate(-20 9.5 9.5)" fill="#e4e4e4"/></g></svg>
<svg style="left:946.5px;top:394.6px" width="19" height="19" viewBox="0 0 19 19"><rect x="5.3" y="6" width="8.4" height="7" fill="#e4e4e4"/><path d="M3.3 3.8 L5.3 5.6 M15.7 3.8 L13.7 5.6 M3.3 15.2 L5.3 13.4 M15.7 15.2 L13.7 13.4" stroke="#e4e4e4" stroke-width="1.2"/><path d="M2.6 3 H4.8 L2.6 5.2Z M16.4 3 H14.2 L16.4 5.2Z M2.6 16 H4.8 L2.6 13.8Z M16.4 16 H14.2 L16.4 13.8Z" fill="#e4e4e4"/></svg>
<svg style="left:968px;top:394.6px" width="19" height="19" viewBox="0 0 19 19"><g transform="translate(19 0) scale(-1 1)"><path d="M4.5 7 A5.3 5.3 0 1 0 7.5 4.3" stroke="#e4e4e4" stroke-width="1.6" fill="none"/><path d="M6 2 L10 4.2 L6.5 7Z" fill="#e4e4e4"/><rect x="6.3" y="7" width="6.4" height="5" transform="rotate(-20 9.5 9.5)" fill="#e4e4e4"/></g></svg>
<svg style="left:995.2px;top:394.6px" width="19" height="19" viewBox="0 0 19 19"><rect x="3.5" y="8" width="5" height="7" fill="#e4e4e4"/><rect x="11" y="8" width="4.5" height="7" stroke="#e4e4e4" stroke-width="1.1" fill="none"/><path d="M4.5 6.5 C6 3 12 3 14 6.5" stroke="#e4e4e4" stroke-width="1.2" fill="none"/><path d="M9.5 4 V16" stroke="#e4e4e4" stroke-width="0.9"/></svg>
<div class="a" style="left:731.7px;top:415.4px;width:292.3px;height:1.2px;background:#1e1e1e;"></div>
<div class="a" style="left:731.7px;top:416.8px;width:292.3px;height:1.6px;background:#f2f2f2;"></div>
<div class="a" style="left:731.7px;top:418.4px;width:292.3px;height:3.2px;background:#1c2329;"></div>
<div class="a" style="left:731.7px;top:421.5px;width:292.3px;height:1.2px;background:#4f87ad;"></div>
<div class="a" style="left:731.7px;top:422.5px;width:292.3px;height:15.6px;background:linear-gradient(#3c3c3c,#363636)"></div>
<div class="t" style="left:845.90px;top:427.20px;font-size:8.5px;color:#d2d2d2;transform:scaleX(0.9848) ;transform-origin:0 7.20px;">Brush Size</div>
<svg style="left:1000px;top:427.8px" width="22" height="8" viewBox="0 0 22 8"><path d="M5.5 1.5 H0.6 V7.4 H6.5 V2.5" stroke="#d8d8d8" stroke-width="1" fill="none"/><path d="M3.5 4.5 L7.5 0.5 M5.5 0.5 H7.5 V2.5" stroke="#d8d8d8" stroke-width="1" fill="none"/><path d="M14.5 1 L20 6.8 M20 1 L14.5 6.8" stroke="#d8d8d8" stroke-width="2"/></svg>
<div class="a" style="left:731.7px;top:438px;width:292.3px;height:97.6px;background:#4a4a4a;"></div>
<div class="a" style="left:732px;top:438.6px;width:255px;height:97px;background:#3e3e3e;"></div>
<div class="a" style="left:732px;top:438.6px;width:30.9px;height:17.1px;background:#585858;"></div>
<div class="a" style="left:732px;top:457px;width:30.9px;height:37.7px;background:radial-gradient(circle at 50% 40%,#505050 0,#505050 14px,#595959 17px)"></div>
<div class="a" style="left:732px;top:496.6px;width:30.9px;height:39px;background:radial-gradient(circle at 50% 40%,#505050 0,#505050 14px,#595959 17px)"></div>
<div class="t" style="left:745.84px;top:446.87px;font-size:7.6px;color:#f0f0f0;">1</div>
<div class="t" style="left:743.73px;top:487.37px;font-size:7.6px;color:#f0f0f0;">12</div>
<div class="t" style="left:741.62px;top:526.97px;font-size:7.6px;color:#f0f0f0;">100</div>
<svg style="left:736.95px;top:461.3px" width="22" height="22"><circle cx="11" cy="11" r="5.06" fill="#efefef"/></svg>
<svg style="left:736.95px;top:501.2px" width="22" height="22"><circle cx="11" cy="11" r="9.85" fill="#efefef"/></svg>
<div class="a" style="left:764.8px;top:438.6px;width:30.9px;height:17.1px;background:#585858;"></div>
<div class="a" style="left:764.8px;top:457px;width:30.9px;height:37.7px;background:radial-gradient(circle at 50% 40%,#505050 0,#505050 14px,#595959 17px)"></div>
<div class="a" style="left:764.8px;top:496.6px;width:30.9px;height:39px;background:radial-gradient(circle at 50% 40%,#505050 0,#505050 14px,#595959 17px)"></div>
<div class="t" style="left:775.48px;top:446.87px;font-size:7.6px;color:#f0f0f0;">1.5</div>
<div class="t" style="left:776.53px;top:487.37px;font-size:7.6px;color:#f0f0f0;">15</div>
<div class="t" style="left:774.42px;top:526.97px;font-size:7.6px;color:#f0f0f0;">150</div>
<svg style="left:769.75px;top:461.3px" width="22" height="22"><circle cx="11" cy="11" r="6.4" fill="#efefef"/></svg>
<svg style="left:769.75px;top:501.2px" width="22" height="22"><circle cx="11" cy="11" r="9.85" fill="#efefef"/></svg>
<div class="a" style="left:797px;top:438.6px;width:30.9px;height:17.1px;background:#585858;"></div>
<div class="a" style="left:797px;top:457px;width:30.9px;height:37.7px;background:radial-gradient(circle at 50% 40%,#505050 0,#505050 14px,#595959 17px)"></div>
<div class="a" style="left:797px;top:496.6px;width:30.9px;height:39px;background:radial-gradient(circle at 50% 40%,#505050 0,#505050 14px,#595959 17px)"></div>
<div class="t" style="left:810.84px;top:446.87px;font-size:7.6px;color:#f0f0f0;">2</div>
<div class="t" style="left:808.73px;top:487.37px;font-size:7.6px;color:#f0f0f0;">20</div>
<div class="t" style="left:806.62px;top:526.97px;font-size:7.6px;color:#f0f0f0;">200</div>
<svg style="left:801.95px;top:461.3px" width="22" height="22"><circle cx="11" cy="11" r="8.1" fill="#efefef"/></svg>
<svg style="left:801.95px;top:501.2px" width="22" height="22"><circle cx="11" cy="11" r="9.85" fill="#efefef"/></svg>
<div class="a" style="left:828.9px;top:438.6px;width:30.9px;height:17.1px;background:#585858;"></div>
<div class="a" style="left:828.9px;top:457px;width:30.9px;height:37.7px;background:radial-gradient(circle at 50% 40%,#505050 0,#505050 14px,#595959 17px)"></div>
<div class="a" style="left:828.9px;top:496.6px;width:30.9px;height:39px;background:radial-gradient(circle at 50% 40%,#505050 0,#505050 14px,#595959 17px)"></div>
<div class="t" style="left:842.74px;top:446.87px;font-size:7.6px;color:#f0f0f0;">3</div>
<div class="t" style="left:840.63px;top:487.37px;font-size:7.6px;color:#f0f0f0;">25</div>
<div class="t" style="left:838.52px;top:526.97px;font-size:7.6px;color:#f0f0f0;">300</div>
<svg style="left:833.85px;top:461.3px" width="22" height="22"><circle cx="11" cy="11" r="9.85" fill="#efefef"/></svg>
<svg style="left:833.85px;top:501.2px" width="22" height="22"><circle cx="11" cy="11" r="9.85" fill="#efefef"/></svg>
<div class="a" style="left:860.5px;top:438.6px;width:30.9px;height:17.1px;background:#585858;"></div>
<div class="a" style="left:860.5px;top:457px;width:30.9px;height:37.7px;background:radial-gradient(circle at 50% 40%,#505050 0,#505050 14px,#595959 17px)"></div>
<div class="a" style="left:860.5px;top:496.6px;width:30.9px;height:39px;background:radial-gradient(circle at 50% 40%,#505050 0,#505050 14px,#595959 17px)"></div>
<div class="t" style="left:874.34px;top:446.87px;font-size:7.6px;color:#f0f0f0;">4</div>
<div class="t" style="left:872.23px;top:487.37px;font-size:7.6px;color:#f0f0f0;">30</div>
<div class="t" style="left:870.12px;top:526.97px;font-size:7.6px;color:#f0f0f0;">400</div>
<svg style="left:865.45px;top:461.3px" width="22" height="22"><circle cx="11" cy="11" r="9.85" fill="#efefef"/></svg>
<svg style="left:865.45px;top:501.2px" width="22" height="22"><circle cx="11" cy="11" r="9.85" fill="#efefef"/></svg>
<div class="a" style="left:893.3px;top:438.6px;width:30.9px;height:17.1px;background:#585858;"></div>
<div class="a" style="left:893.3px;top:457px;width:30.9px;height:37.7px;background:radial-gradient(circle at 50% 40%,#505050 0,#505050 14px,#595959 17px)"></div>
<div class="a" style="left:893.3px;top:496.6px;width:30.9px;height:39px;background:radial-gradient(circle at 50% 40%,#505050 0,#505050 14px,#595959 17px)"></div>
<div class="t" style="left:907.14px;top:446.87px;font-size:7.6px;color:#f0f0f0;">5</div>
<div class="t" style="left:905.03px;top:487.37px;font-size:7.6px;color:#f0f0f0;">40</div>
<div class="t" style="left:902.92px;top:526.97px;font-size:7.6px;color:#f0f0f0;">500</div>
<svg style="left:898.25px;top:461.3px" width="22" height="22"><circle cx="11" cy="11" r="9.85" fill="#efefef"/></svg>
<svg style="left:898.25px;top:501.2px" width="22" height="22"><circle cx="11" cy="11" r="9.85" fill="#efefef"/></svg>
<div class="a" style="left:924.6px;top:438.6px;width:30.9px;height:17.1px;background:#585858;"></div>
<div class="a" style="left:924.6px;top:457px;width:30.9px;height:37.7px;background:radial-gradient(circle at 50% 40%,#505050 0,#505050 14px,#595959 17px)"></div>
<div class="a" style="left:924.6px;top:496.6px;width:30.9px;height:39px;background:radial-gradient(circle at 50% 40%,#505050 0,#505050 14px,#595959 17px)"></div>
<div class="t" style="left:938.44px;top:446.87px;font-size:7.6px;color:#f0f0f0;">7</div>
<div class="t" style="left:936.33px;top:487.37px;font-size:7.6px;color:#f0f0f0;">50</div>
<div class="t" style="left:934.22px;top:526.97px;font-size:7.6px;color:#f0f0f0;">700</div>
<svg style="left:929.5500000000001px;top:461.3px" width="22" height="22"><circle cx="11" cy="11" r="9.85" fill="#efefef"/></svg>
<svg style="left:929.5500000000001px;top:501.2px" width="22" height="22"><circle cx="11" cy="11" r="9.85" fill="#efefef"/></svg>
<div class="a" style="left:956.8px;top:438.6px;width:30.9px;height:17.1px;background:#585858;"></div>
<div class="a" style="left:956.8px;top:457px;width:30.9px;height:37.7px;background:radial-gradient(circle at 50% 40%,#505050 0,#505050 14px,#595959 17px)"></div>
<div class="a" style="left:956.8px;top:496.6px;width:30.9px;height:39px;background:radial-gradient(circle at 50% 40%,#505050 0,#505050 14px,#595959 17px)"></div>
<div class="t" style="left:968.53px;top:446.87px;font-size:7.6px;color:#f0f0f0;">10</div>
<div class="t" style="left:968.53px;top:487.37px;font-size:7.6px;color:#f0f0f0;">70</div>
<div class="t" style="left:964.31px;top:526.97px;font-size:7.6px;color:#f0f0f0;">1000</div>
<svg style="left:961.75px;top:461.3px" width="22" height="22"><circle cx="11" cy="11" r="9.85" fill="#efefef"/></svg>
<svg style="left:961.75px;top:501.2px" width="22" height="22"><circle cx="11" cy="11" r="9.85" fill="#efefef"/></svg>
<div class="a" style="left:986.6px;top:438.6px;width:21.4px;height:97px;background:#4a4a4a;"></div>
<div class="a" style="left:1008px;top:438.6px;width:16px;height:97px;background:#2c2c2c;"></div>
<svg style="left:1008px;top:438.6px" width="16" height="97"><path d="M8 1.5 L11 6.5 H5Z" fill="#cfcfcf"/><rect x="1" y="8.5" width="14" height="17" fill="#3a3a3a"/><rect x="1.3" y="25.8" width="13.4" height="61.6" rx="5" fill="#6c6c6c"/><path d="M8 95.5 L11 90.5 H5Z" fill="#cfcfcf"/></svg>
<div class="a" style="left:0px;top:535.7px;width:1024px;height:16.1px;background:#212121;"></div>
<div class="a" style="left:732px;top:535.6px;width:292px;height:1px;background:#1a1a1a;"></div>
<div class="t" style="left:5.10px;top:540.12px;font-size:8.6px;color:#c4c4c4;transform:scaleX(1.0371) ;transform-origin:0 7.28px;">6500 * 5000 pixel</div>
<div class="t" style="left:81.30px;top:540.12px;font-size:8.6px;color:#c4c4c4;transform:scaleX(1.0448) ;transform-origin:0 7.28px;">(47.2 * 36.3cm)</div>
<div class="t" style="left:151.70px;top:540.12px;font-size:8.6px;color:#c4c4c4;transform:scaleX(1.0637) ;transform-origin:0 7.28px;">350 dpi</div>
<div class="t" style="left:189.00px;top:540.12px;font-size:8.6px;color:#c4c4c4;transform:scaleX(1.0105) ;transform-origin:0 7.28px;">10 %</div>
<div class="t" style="left:216.90px;top:540.12px;font-size:8.6px;color:#c4c4c4;transform:scaleX(0.9908) ;transform-origin:0 7.28px;">( 6523, 996 )</div>
<div class="a" style="left:0px;top:551.8px;width:1024px;height:24.2px;background:#d5e4f0;"></div>
<svg style="left:8px;top:557.6px" width="14" height="13"><path d="M0 0.8 L6 0 V6 H0Z M6.8 0 L13.2 -0.8 V6 H6.8Z M0 6.8 H6 V12.8 L0 12Z M6.8 6.8 H13.2 V13.6 L6.8 12.8Z" fill="#111"/></svg>
<svg style="left:36px;top:556.5px" width="15" height="15"><circle cx="9" cy="6" r="4.6" stroke="#111" stroke-width="1.3" fill="none"/><path d="M5.6 9.4 L1 14" stroke="#111" stroke-width="1.4"/></svg>
<svg style="left:65px;top:557px" width="14" height="14"><circle cx="7" cy="7" r="5.6" stroke="#111" stroke-width="1.6" fill="none"/></svg>
<svg style="left:93.5px;top:557px" width="14" height="14"><path d="M1 2 H9 M1 12 H9 M2.5 4 H8 V10 H2.5Z" stroke="#111" stroke-width="1.2" fill="none"/><rect x="11.5" y="2" width="1.6" height="1.6" fill="#111"/><path d="M12.3 5 V12.5" stroke="#111" stroke-width="1.3"/></svg>
<svg style="left:125px;top:557px" width="14" height="14" viewBox="0 0 14 14"><circle cx="7" cy="7" r="5.6" stroke="#d33a2c" stroke-width="2" fill="#fbeee8"/><path d="M9.3 4.6 A3.2 3.2 0 1 0 9.3 9.4" stroke="#c0302a" stroke-width="1.6" fill="none"/><path d="M5 7 H8.5" stroke="#444" stroke-width="1"/></svg>
<div class="a" style="left:147.3px;top:551.8px;width:28.6px;height:24.2px;background:#fda86f;"></div>
<svg style="left:154.5px;top:556.5px" width="15" height="15" viewBox="0 0 15 15"><defs><linearGradient id="ed" x1="0.2" y1="1" x2="0.9" y2="0"><stop offset="0" stop-color="#0c4fa8"/><stop offset="0.55" stop-color="#1a8ad8"/><stop offset="1" stop-color="#4fd88a"/></linearGradient></defs><circle cx="7.5" cy="7.5" r="6.4" fill="url(#ed)"/><path d="M7.3 6.2 C9.3 6 11 7 11.2 8.6 C10 8.3 8.6 8.7 8 9.8 C7.4 10.8 8.2 12 9.5 12.3 C7 12.8 5 11.2 5 9.2 C5 7.6 6 6.4 7.3 6.2Z" fill="#fda86f" opacity="0.85"/></svg>
<svg style="left:183.5px;top:557px" width="16" height="14" viewBox="0 0 16 14"><path d="M1 2 H6 L7.5 3.5 H15 V13 H1Z" fill="#f7c548"/><path d="M1 5 H15 V13 H1Z" fill="#fcd870"/><path d="M5.5 8 H10.5 V13 H9 V9.5 H7 V13 H5.5Z" fill="#2a6fc4"/></svg>
<svg style="left:212px;top:556.5px" width="17" height="15" viewBox="0 0 17 15"><rect x="1" y="1" width="15" height="10" rx="1" fill="#36a6e8"/><rect x="2" y="2" width="13" height="8" fill="#62c2f2"/><path d="M5 13.5 H12" stroke="#1e7cc4" stroke-width="1.5"/><path d="M8.5 11 V13" stroke="#1e7cc4" stroke-width="1.3"/></svg>
<svg style="left:243.5px;top:556.5px" width="14" height="14" viewBox="0 0 14 14"><rect x="0.5" y="0.5" width="13" height="13" fill="#e6f2e6" stroke="#1e7145" stroke-width="1"/><text x="2.5" y="11.5" font-size="11" font-weight="bold" font-family="Liberation Sans" fill="#1e7145">X</text></svg>
<svg style="left:273px;top:556.5px" width="14" height="14" viewBox="0 0 14 14"><rect x="0.5" y="0.5" width="13" height="13" fill="#e3ecf9" stroke="#2b5eb7" stroke-width="1"/><text x="0.8" y="11.5" font-size="10.5" font-weight="bold" font-family="Liberation Sans" fill="#2b5eb7">W</text></svg>
<svg style="left:302.5px;top:556.5px" width="14" height="14" viewBox="0 0 14 14"><rect x="0.5" y="0.5" width="13" height="13" fill="#fbe5dc" stroke="#d24726" stroke-width="1"/><text x="3" y="11.5" font-size="11" font-weight="bold" font-family="Liberation Sans" fill="#d24726">P</text></svg>
<svg style="left:332px;top:556.5px" width="15" height="15" viewBox="0 0 16 16"><circle cx="8" cy="8" r="7.3" fill="#db4437"/><path d="M8 8 L1.7 4.35 A7.3 7.3 0 0 0 8 15.3Z" fill="#0f9d58"/><path d="M8 8 L8 15.3 A7.3 7.3 0 0 0 14.3 4.35Z" fill="#f4b400"/><circle cx="8" cy="8" r="3.6" fill="#fff"/><circle cx="8" cy="8" r="2.8" fill="#4285f4"/></svg>
<div class="a" style="left:328.3px;top:574px;width:22px;height:2px;background:#2a77d0;"></div>
<div class="a" style="left:354.4px;top:551.8px;width:28.8px;height:24.2px;background:#e6eff7;"></div>
<div class="a" style="left:354.4px;top:574px;width:28.8px;height:2px;background:#2a77d0;"></div>
<svg style="left:362.5px;top:557px" width="13" height="14" viewBox="0 0 11 12"><defs><radialGradient id="mb" cx="0.4" cy="0.3" r="0.8"><stop offset="0" stop-color="#f36a3a"/><stop offset="0.5" stop-color="#d83a50"/><stop offset="1" stop-color="#1aa890"/></radialGradient></defs><ellipse cx="5.5" cy="6" rx="4.6" ry="5.2" fill="url(#mb)"/><path d="M1 7 C2 10 8 11.5 10 7.5 C9 10.5 3 11 1 7Z" fill="#26b07a"/><path d="M2 3 C3 1 6 0.5 7.5 1.5 C5 1.8 3 2.5 2 3Z" fill="#f7d23a"/></svg>
<div class="a" style="left:147.3px;top:574.5px;width:28.6px;height:1.5px;background:#e8742a;"></div>
<svg style="left:729.5px;top:555px" width="16" height="17" viewBox="0 0 16 17"><path d="M4 9 C1.5 9 1.5 5.5 4 5.3 C4.5 2 10 1.5 11 4.8 C14 4.8 14 9 11.5 9Z" fill="#b9d6ee"/><circle cx="5" cy="11.5" r="1" fill="#6aa6dc"/><circle cx="8" cy="12.5" r="1" fill="#6aa6dc"/><circle cx="10.5" cy="11" r="1" fill="#6aa6dc"/><circle cx="4" cy="15" r="0.9" fill="#6aa6dc"/><circle cx="7.5" cy="15.5" r="0.9" fill="#8ab8e2"/></svg>
<div class="t" style="left:753.70px;top:559.70px;font-size:10.4px;color:#1a1a1a;transform:scaleX(0.9609) ;transform-origin:0 8.80px;">88°F</div>
<div class="t" style="left:783.00px;top:559.70px;font-size:10.4px;color:#1a1a1a;transform:scaleX(0.9450) ;transform-origin:0 8.80px;">Rain</div>
<svg style="left:813px;top:559px" width="10" height="7"><path d="M0.8 5.8 L5 1.2 L9.2 5.8" stroke="#222" stroke-width="1.2" fill="none"/></svg>
<svg style="left:830px;top:558.5px" width="14" height="10" viewBox="0 0 14 10"><rect x="3.5" y="2" width="9.5" height="6.5" stroke="#222" stroke-width="1" fill="none"/><rect x="4.5" y="3" width="4" height="4.5" fill="#222"/><path d="M1.5 0.5 V4 M0.5 2 H2.5 M1.5 4 C1.5 6 3 6 3.5 6" stroke="#222" stroke-width="0.9" fill="none"/></svg>
<svg style="left:849.5px;top:558px" width="12" height="11" viewBox="0 0 12 11"><path d="M0.8 3.5 H3 L6 0.8 V10.2 L3 7.5 H0.8Z" stroke="#222" stroke-width="1" fill="none"/><path d="M7.8 3.5 L11 6.8 M11 3.5 L7.8 6.8" stroke="#222" stroke-width="1"/></svg>
<svg style="left:868px;top:557px" width="13" height="13" viewBox="0 0 13 13"><path d="M1 12 A11 11 0 0 1 12 1 M1 12 A8 8 0 0 1 9 4 M1 12 A5 5 0 0 1 6 7" stroke="#222" stroke-width="1.1" fill="none" opacity="0.85"/><circle cx="3.5" cy="10.5" r="1.3" fill="#222"/></svg>
<svg style="left:889px;top:557px" width="11" height="14" viewBox="0 0 11 14"><rect x="1" y="4" width="6.5" height="6" rx="1" stroke="#222" stroke-width="1.1" fill="none"/><path d="M7.5 6 L10 4.5 V9.5 L7.5 8" stroke="#222" stroke-width="1" fill="none"/><path d="M2 2 A5 3 0 0 1 8 2 M2 12 A5 3 0 0 0 8 12" stroke="#222" stroke-width="0.8" fill="none"/></svg>
<div class="t" style="left:908.80px;top:560.37px;font-size:9.6px;color:#1a1a1a;transform:scaleX(0.8607) ;transform-origin:0 8.13px;">ENG</div>
<div class="t" style="left:939.90px;top:560.37px;font-size:9.6px;color:#1a1a1a;transform:scaleX(0.9435) ;transform-origin:0 8.13px;">2:27 PM</div>
<svg style="left:991px;top:557.5px" width="13.5" height="14" viewBox="0 0 13.5 14"><path d="M0.5 0.5 H13 V10.5 H8.5 L6.75 12.8 L5 10.5 H0.5Z" fill="#111"/><path d="M3 3.3 H10.5 M3 5.5 H10.5 M3 7.7 H8.5" stroke="#d5e4f0" stroke-width="0.9"/></svg>
<div class="a" style="left:1020.4px;top:553px;width:1px;height:23px;background:#9aa6b0;"></div>
</body></html>
